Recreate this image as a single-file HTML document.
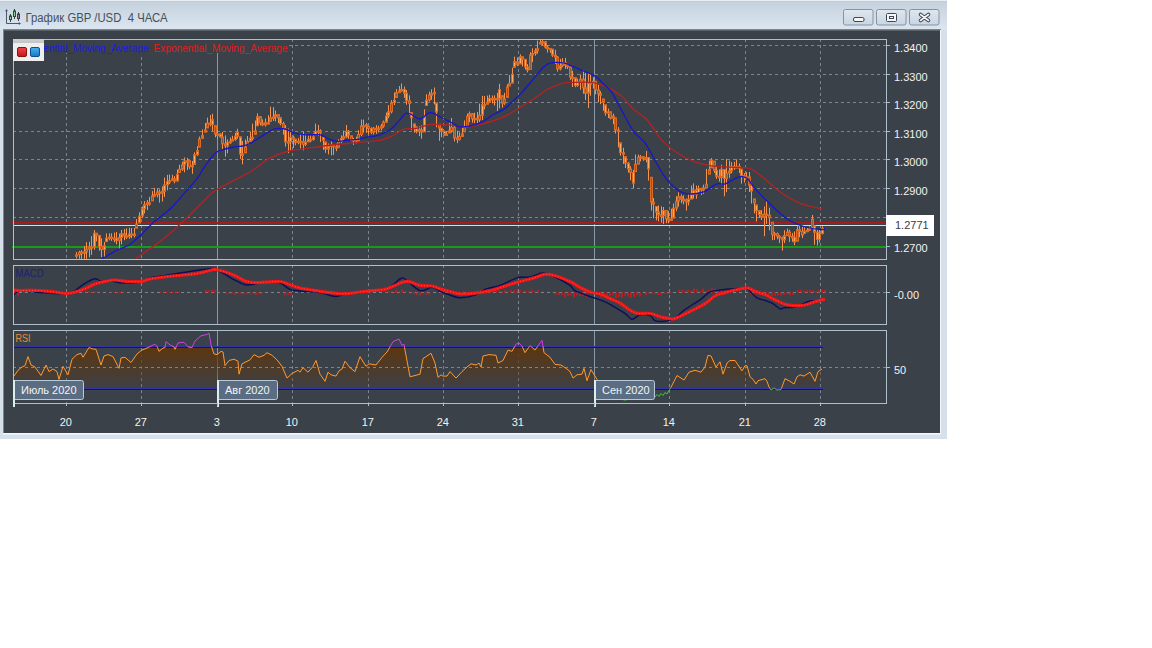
<!DOCTYPE html>
<html><head><meta charset="utf-8"><style>html,body{margin:0;padding:0;background:#fff;width:1152px;height:648px;overflow:hidden}svg{display:block}</style></head>
<body><svg width="1152" height="648" viewBox="0 0 1152 648">
<rect x="0" y="0" width="947" height="439" fill="#d6e0ea"/>
<defs>
<linearGradient id="tb" x1="0" y1="0" x2="0" y2="1"><stop offset="0" stop-color="#c3d0dc"/><stop offset="1" stop-color="#dce6f0"/></linearGradient>
<linearGradient id="btn" x1="0" y1="0" x2="0" y2="1"><stop offset="0" stop-color="#dfe7ef"/><stop offset="1" stop-color="#c9d5e1"/></linearGradient>
<linearGradient id="rsifill" gradientUnits="userSpaceOnUse" x1="0" y1="347" x2="0" y2="392"><stop offset="0" stop-color="#5c3610" stop-opacity="1"/><stop offset="1" stop-color="#5c3610" stop-opacity="0"/></linearGradient>
<linearGradient id="legtop" x1="0" y1="0" x2="0" y2="1"><stop offset="0" stop-color="#cfcfcf"/><stop offset="1" stop-color="#c4c4c4"/></linearGradient>
<linearGradient id="sqr" x1="0" y1="0" x2="0" y2="1"><stop offset="0" stop-color="#f04848"/><stop offset="1" stop-color="#c01818"/></linearGradient>
<linearGradient id="sqb" x1="0" y1="0" x2="0" y2="1"><stop offset="0" stop-color="#48b0f0"/><stop offset="1" stop-color="#1878c0"/></linearGradient>
<clipPath id="cmain"><rect x="14" y="40" width="872" height="219"/></clipPath>
<clipPath id="cmacd"><rect x="14" y="266" width="872" height="58"/></clipPath>
<clipPath id="crsi"><rect x="14" y="331" width="872" height="72"/></clipPath>
<clipPath id="crsimid"><rect x="14" y="347" width="872" height="56"/></clipPath>
<clipPath id="crsitop"><rect x="14" y="331" width="872" height="16.5"/></clipPath>
<clipPath id="crsibot"><rect x="14" y="388.5" width="872" height="15"/></clipPath>
<clipPath id="crsiorange"><rect x="14" y="346.5" width="872" height="42"/></clipPath>
</defs>
<rect x="0" y="0" width="947" height="30" fill="url(#tb)"/>
<rect x="0" y="0" width="947" height="1" fill="#e8eef4"/>
<rect x="0" y="1" width="947" height="1" fill="#c2cbd4"/>
<g fill="none" stroke="#4a5a6c" stroke-width="1"><path d="M6.5,10 V23.5 H20"/></g>
<path d="M5,11.2 L6.5,9 L8,11.2 Z M18.8,22 L21,23.5 L18.8,25 Z" fill="#4a5a6c"/>
<g stroke="#34404c" stroke-width="1"><line x1="10.5" y1="14" x2="10.5" y2="22"/><line x1="14.5" y1="9" x2="14.5" y2="19"/><line x1="18.5" y1="12" x2="18.5" y2="21"/></g>
<rect x="9.5" y="16" width="2" height="3.5" fill="#9ccf9c" stroke="#2f4a36"/>
<rect x="13.5" y="11" width="2" height="5.5" fill="#8fcc8f" stroke="#2f4a36"/>
<rect x="17.5" y="14" width="2" height="4.5" fill="#a07c88" stroke="#453440"/>
<text x="25.5" y="21.7" font-family="Liberation Sans" font-size="12.3" fill="#45505e" textLength="142" lengthAdjust="spacingAndGlyphs" xml:space="preserve">График GBP /USD  4 ЧАСА</text>
<rect x="843.5" y="9.5" width="29.5" height="15.5" rx="2" fill="url(#btn)" stroke="#8494a6"/>
<rect x="876.5" y="9.5" width="29.5" height="15.5" rx="2" fill="url(#btn)" stroke="#8494a6"/>
<rect x="909.5" y="9.5" width="29.5" height="15.5" rx="2" fill="url(#btn)" stroke="#8494a6"/>
<rect x="853.5" y="17.5" width="10.5" height="4" rx="1.5" fill="#f4f6f8" stroke="#3c4654"/>
<rect x="886.5" y="13.5" width="10" height="8" rx="1" fill="#f4f6f8" stroke="#3c4654"/><rect x="889.5" y="16.5" width="4" height="2" fill="none" stroke="#3c4654"/>
<path d="M920.5,14.5 L928.5,20.5 M928.5,14.5 L920.5,20.5" stroke="#3c4654" stroke-width="3.6" stroke-linecap="round"/><path d="M920.5,14.5 L928.5,20.5 M928.5,14.5 L920.5,20.5" stroke="#f4f6f8" stroke-width="1.6" stroke-linecap="round"/>
<rect x="3" y="29" width="938" height="405" fill="#7c848c"/>
<rect x="4" y="30" width="936" height="403" fill="#3b4149"/>
<rect x="940" y="30" width="1" height="404" fill="#f4f7fa"/>
<rect x="3" y="433" width="938" height="1.5" fill="#f4f7fa"/>
<rect x="4" y="30" width="936" height="1" fill="#5a6068"/>
<line x1="13" y1="45.5" x2="886" y2="45.5" stroke="#7a858f" stroke-width="1" stroke-dasharray="3,3"/>
<line x1="13" y1="74.5" x2="886" y2="74.5" stroke="#7a858f" stroke-width="1" stroke-dasharray="3,3"/>
<line x1="13" y1="102.5" x2="886" y2="102.5" stroke="#7a858f" stroke-width="1" stroke-dasharray="3,3"/>
<line x1="13" y1="131.5" x2="886" y2="131.5" stroke="#7a858f" stroke-width="1" stroke-dasharray="3,3"/>
<line x1="13" y1="159.5" x2="886" y2="159.5" stroke="#7a858f" stroke-width="1" stroke-dasharray="3,3"/>
<line x1="13" y1="188.5" x2="886" y2="188.5" stroke="#7a858f" stroke-width="1" stroke-dasharray="3,3"/>
<line x1="13" y1="217.5" x2="886" y2="217.5" stroke="#7a858f" stroke-width="1" stroke-dasharray="3,3"/>
<line x1="13" y1="246.5" x2="886" y2="246.5" stroke="#7a858f" stroke-width="1" stroke-dasharray="3,3"/>
<line x1="66.5" y1="39" x2="66.5" y2="259" stroke="#7a858f" stroke-width="1" stroke-dasharray="3,3"/>
<line x1="66.5" y1="265" x2="66.5" y2="324" stroke="#7a858f" stroke-width="1" stroke-dasharray="3,3"/>
<line x1="66.5" y1="330" x2="66.5" y2="403" stroke="#7a858f" stroke-width="1" stroke-dasharray="3,3"/>
<line x1="141.5" y1="39" x2="141.5" y2="259" stroke="#7a858f" stroke-width="1" stroke-dasharray="3,3"/>
<line x1="141.5" y1="265" x2="141.5" y2="324" stroke="#7a858f" stroke-width="1" stroke-dasharray="3,3"/>
<line x1="141.5" y1="330" x2="141.5" y2="403" stroke="#7a858f" stroke-width="1" stroke-dasharray="3,3"/>
<line x1="292.5" y1="39" x2="292.5" y2="259" stroke="#7a858f" stroke-width="1" stroke-dasharray="3,3"/>
<line x1="292.5" y1="265" x2="292.5" y2="324" stroke="#7a858f" stroke-width="1" stroke-dasharray="3,3"/>
<line x1="292.5" y1="330" x2="292.5" y2="403" stroke="#7a858f" stroke-width="1" stroke-dasharray="3,3"/>
<line x1="368.5" y1="39" x2="368.5" y2="259" stroke="#7a858f" stroke-width="1" stroke-dasharray="3,3"/>
<line x1="368.5" y1="265" x2="368.5" y2="324" stroke="#7a858f" stroke-width="1" stroke-dasharray="3,3"/>
<line x1="368.5" y1="330" x2="368.5" y2="403" stroke="#7a858f" stroke-width="1" stroke-dasharray="3,3"/>
<line x1="443.5" y1="39" x2="443.5" y2="259" stroke="#7a858f" stroke-width="1" stroke-dasharray="3,3"/>
<line x1="443.5" y1="265" x2="443.5" y2="324" stroke="#7a858f" stroke-width="1" stroke-dasharray="3,3"/>
<line x1="443.5" y1="330" x2="443.5" y2="403" stroke="#7a858f" stroke-width="1" stroke-dasharray="3,3"/>
<line x1="518.5" y1="39" x2="518.5" y2="259" stroke="#7a858f" stroke-width="1" stroke-dasharray="3,3"/>
<line x1="518.5" y1="265" x2="518.5" y2="324" stroke="#7a858f" stroke-width="1" stroke-dasharray="3,3"/>
<line x1="518.5" y1="330" x2="518.5" y2="403" stroke="#7a858f" stroke-width="1" stroke-dasharray="3,3"/>
<line x1="669.5" y1="39" x2="669.5" y2="259" stroke="#7a858f" stroke-width="1" stroke-dasharray="3,3"/>
<line x1="669.5" y1="265" x2="669.5" y2="324" stroke="#7a858f" stroke-width="1" stroke-dasharray="3,3"/>
<line x1="669.5" y1="330" x2="669.5" y2="403" stroke="#7a858f" stroke-width="1" stroke-dasharray="3,3"/>
<line x1="745.5" y1="39" x2="745.5" y2="259" stroke="#7a858f" stroke-width="1" stroke-dasharray="3,3"/>
<line x1="745.5" y1="265" x2="745.5" y2="324" stroke="#7a858f" stroke-width="1" stroke-dasharray="3,3"/>
<line x1="745.5" y1="330" x2="745.5" y2="403" stroke="#7a858f" stroke-width="1" stroke-dasharray="3,3"/>
<line x1="820.5" y1="39" x2="820.5" y2="259" stroke="#7a858f" stroke-width="1" stroke-dasharray="3,3"/>
<line x1="820.5" y1="265" x2="820.5" y2="324" stroke="#7a858f" stroke-width="1" stroke-dasharray="3,3"/>
<line x1="820.5" y1="330" x2="820.5" y2="403" stroke="#7a858f" stroke-width="1" stroke-dasharray="3,3"/>
<line x1="217.5" y1="40" x2="217.5" y2="259" stroke="#8799a8" stroke-width="1"/>
<line x1="217.5" y1="266" x2="217.5" y2="324" stroke="#8799a8" stroke-width="1"/>
<line x1="217.5" y1="331" x2="217.5" y2="403" stroke="#8799a8" stroke-width="1"/>
<line x1="594.5" y1="40" x2="594.5" y2="259" stroke="#8799a8" stroke-width="1"/>
<line x1="594.5" y1="266" x2="594.5" y2="324" stroke="#8799a8" stroke-width="1"/>
<line x1="594.5" y1="331" x2="594.5" y2="403" stroke="#8799a8" stroke-width="1"/>
<line x1="13" y1="292.5" x2="886" y2="292.5" stroke="#7a858f" stroke-width="1" stroke-dasharray="3,3"/>
<line x1="13" y1="367.5" x2="886" y2="367.5" stroke="#7a858f" stroke-width="1" stroke-dasharray="3,3"/>
<rect x="12" y="222" width="874" height="2" fill="#a51c1c"/>
<rect x="14" y="225" width="872" height="1" fill="#dcdcdc"/>
<rect x="12" y="246" width="874" height="2" fill="#1a9a1a"/>
<g clip-path="url(#cmain)">
<path d="M76.5,252.1V258.5M79.5,250.8V258.7M81.5,250.2V259.0M84.5,246.0V258.9M86.5,242.2V258.8M89.5,241.8V257.3M91.5,236.1V254.8M94.5,230.1V249.7M96.5,233.0V241.4M99.5,235.1V250.8M101.5,238.3V257.1M104.5,242.0V257.7M106.5,233.4V241.6M109.5,233.3V240.3M111.5,233.3V240.9M114.5,232.6V242.2M116.5,232.0V244.3M119.5,233.5V249.3M121.5,230.0V244.3M124.5,229.0V240.2M126.5,228.3V239.1M129.5,227.7V238.8M131.5,228.0V238.2M134.5,228.0V237.3M136.5,219.1V228.1M139.5,212.3V223.0M142.5,206.6V218.1M144.5,201.1V213.4M147.5,200.1V210.1M149.5,196.9V205.7M152.5,191.1V200.9M154.5,187.9V196.9M157.5,188.5V197.4M159.5,189.5V202.6M162.5,186.4V201.5M164.5,177.6V197.1M167.5,174.9V190.3M169.5,174.5V184.0M172.5,174.8V180.8M174.5,176.1V183.3M177.5,169.6V181.1M179.5,164.8V172.5M182.5,161.8V170.9M184.5,157.5V172.3M187.5,157.9V170.0M189.5,160.6V168.9M192.5,161.0V173.8M194.5,152.3V164.3M197.5,146.2V155.8M199.5,136.5V147.1M202.5,129.5V138.4M205.5,123.0V132.1M207.5,117.6V128.0M210.5,115.0V126.5M212.5,113.8V131.0M215.5,125.7V137.3M217.5,130.3V139.1M220.5,133.2V137.7M222.5,132.0V149.2M225.5,135.4V156.7M227.5,139.4V153.3M230.5,137.5V143.8M232.5,135.8V141.0M235.5,132.9V140.8M237.5,128.8V138.6M240.5,136.8V159.0M242.5,141.0V164.4M245.5,139.4V152.9M247.5,136.0V144.4M250.5,131.5V141.4M252.5,123.7V140.4M255.5,120.5V134.3M257.5,113.4V125.7M260.5,116.3V125.3M262.5,119.4V126.2M265.5,118.4V126.5M268.5,115.1V124.4M270.5,106.7V121.4M273.5,107.1V121.0M275.5,110.5V121.4M278.5,114.7V123.0M280.5,117.5V125.3M283.5,121.8V134.6M285.5,125.1V146.5M288.5,128.5V153.1M290.5,130.5V151.0M293.5,135.6V148.0M295.5,138.9V145.3M298.5,138.1V144.3M300.5,133.7V148.6M303.5,131.7V150.4M305.5,134.3V146.0M308.5,135.4V142.2M310.5,135.3V142.2M313.5,133.5V140.5M315.5,123.7V134.8M318.5,124.9V136.1M320.5,129.3V142.1M323.5,137.3V149.7M325.5,141.9V152.8M328.5,143.5V154.4M331.5,141.6V155.4M333.5,143.9V154.9M336.5,143.8V151.2M338.5,139.3V147.4M341.5,135.3V143.3M343.5,130.6V139.9M346.5,125.0V138.1M348.5,130.0V138.8M351.5,135.8V141.2M353.5,137.8V144.9M356.5,136.7V143.4M358.5,130.2V140.9M361.5,119.5V136.2M363.5,119.6V132.6M366.5,123.0V132.8M368.5,126.3V134.7M371.5,127.4V134.1M373.5,126.9V134.5M376.5,125.1V133.9M378.5,125.7V132.4M381.5,124.0V130.4M383.5,120.5V127.7M386.5,112.5V122.9M388.5,105.2V118.1M391.5,100.1V113.4M394.5,92.4V105.0M396.5,89.1V97.4M399.5,86.0V92.9M401.5,83.5V91.7M404.5,86.6V97.9M406.5,90.0V104.8M409.5,95.3V114.9M411.5,112.6V130.1M414.5,123.9V132.7M416.5,126.4V133.4M419.5,126.2V136.1M421.5,125.4V138.8M424.5,109.3V132.0M426.5,94.1V105.5M429.5,91.7V101.5M431.5,89.3V99.8M434.5,87.5V104.4M436.5,102.9V127.3M439.5,124.3V140.9M441.5,128.2V137.2M444.5,130.6V135.6M446.5,131.4V135.4M449.5,122.5V133.0M451.5,118.0V132.7M454.5,125.4V141.5M457.5,130.7V143.1M459.5,132.3V140.5M462.5,128.0V136.4M464.5,120.4V131.8M467.5,113.7V126.8M469.5,111.5V122.2M472.5,113.2V122.7M474.5,112.7V123.1M477.5,111.9V123.7M479.5,103.5V122.2M482.5,95.9V120.3M484.5,96.0V109.3M487.5,95.6V104.2M489.5,94.8V102.3M492.5,95.5V103.3M494.5,95.4V105.5M497.5,92.8V111.0M499.5,83.8V108.3M502.5,95.7V107.5M504.5,92.8V104.8M507.5,84.2V97.3M509.5,75.0V86.0M512.5,67.7V83.1M514.5,56.7V67.4M517.5,57.4V66.1M520.5,54.4V64.0M522.5,56.7V66.4M525.5,59.3V69.5M527.5,64.2V72.4M530.5,52.3V69.5M532.5,48.3V62.1M535.5,48.3V55.7M537.5,40.6V53.6M540.5,39.7V43.7M542.5,39.6V45.3M545.5,41.0V48.5M547.5,45.1V52.6M550.5,48.0V52.8M552.5,49.0V56.9M555.5,49.8V64.0M557.5,56.0V71.6M560.5,58.9V70.4M562.5,58.1V67.2M565.5,57.9V68.9M567.5,63.8V69.1M570.5,66.1V79.9M572.5,70.8V87.0M575.5,77.7V87.1M577.5,78.7V86.8M580.5,74.6V89.8M583.5,70.1V93.7M585.5,72.8V99.9M588.5,73.3V107.9M590.5,74.3V95.8M593.5,77.3V88.6M595.5,81.2V94.3M598.5,84.7V102.2M600.5,91.2V104.1M603.5,99.0V110.7M605.5,104.8V115.7M608.5,108.6V118.0M610.5,111.8V119.4M613.5,113.7V124.2M615.5,117.9V133.5M618.5,127.2V147.3M620.5,142.8V155.7M623.5,147.8V163.9M625.5,156.7V168.0M628.5,162.1V172.6M630.5,166.2V180.4M633.5,169.9V188.1M635.5,154.5V171.6M638.5,154.6V164.1M640.5,155.0V161.4M643.5,156.5V160.9M646.5,151.0V162.2M648.5,157.5V180.6M651.5,177.3V210.6M653.5,198.0V218.3M656.5,206.5V220.4M658.5,205.5V221.3M661.5,206.4V222.6M663.5,207.0V224.1M666.5,210.3V223.1M668.5,211.1V223.2M671.5,208.7V220.7M673.5,203.5V218.1M676.5,196.2V211.2M678.5,192.3V206.6M681.5,194.5V203.2M683.5,195.5V204.3M686.5,198.5V210.6M688.5,194.3V205.5M691.5,185.5V199.1M693.5,183.4V198.6M696.5,185.6V198.7M698.5,185.5V192.7M701.5,187.8V195.1M703.5,184.7V193.9M706.5,168.9V187.9M709.5,160.6V174.1M711.5,158.1V167.9M714.5,161.1V173.0M716.5,167.2V179.0M719.5,169.4V181.5M721.5,164.7V184.6M724.5,169.4V196.3M726.5,159.1V192.2M729.5,160.6V177.8M731.5,162.1V173.4M734.5,161.8V169.9M736.5,159.3V168.3M739.5,163.5V173.0M741.5,169.1V183.6M744.5,173.2V182.5M746.5,172.2V178.8M749.5,172.0V192.0M751.5,182.6V203.5M754.5,198.9V213.4M756.5,204.9V221.5M759.5,210.4V217.5M761.5,210.2V220.0M764.5,206.5V236.2M766.5,200.9V223.9M769.5,207.7V230.3M772.5,222.2V240.2M774.5,231.8V239.9M777.5,232.5V239.3M779.5,235.1V243.1M782.5,236.6V250.6M784.5,230.2V243.1M787.5,228.6V235.6M789.5,229.7V241.9M792.5,233.1V241.7M794.5,231.4V245.2M797.5,225.6V241.2M799.5,225.2V237.2M802.5,227.0V238.1M804.5,226.7V233.6M807.5,227.8V232.2M809.5,226.5V230.8M812.5,214.9V228.3M814.5,225.9V244.8M817.5,229.5V245.6M819.5,229.9V242.5M822.5,226.3V234.4" stroke="#f59450" stroke-width="1" fill="none"/>
<rect x="75.5" y="254.8" width="2" height="1.5" fill="#8a5a3a" stroke="#dc6a22" stroke-width="1"/>
<rect x="78.5" y="252.4" width="2" height="2.3" fill="#8a5a3a" stroke="#dc6a22" stroke-width="1"/>
<rect x="80.5" y="251.9" width="2" height="1.5" fill="#ffab62" stroke="#dc6a22" stroke-width="1"/>
<rect x="83.5" y="251.9" width="2" height="1.5" fill="#ffab62" stroke="#dc6a22" stroke-width="1"/>
<rect x="85.5" y="249.0" width="2" height="2.9" fill="#8a5a3a" stroke="#dc6a22" stroke-width="1"/>
<rect x="88.5" y="246.8" width="2" height="2.3" fill="#ffab62" stroke="#dc6a22" stroke-width="1"/>
<rect x="90.5" y="246.8" width="2" height="1.5" fill="#ffab62" stroke="#dc6a22" stroke-width="1"/>
<rect x="93.5" y="233.2" width="2" height="13.8" fill="#ffab62" stroke="#dc6a22" stroke-width="1"/>
<rect x="95.5" y="233.2" width="2" height="2.2" fill="#8a5a3a" stroke="#dc6a22" stroke-width="1"/>
<rect x="98.5" y="235.4" width="2" height="11.1" fill="#ffab62" stroke="#dc6a22" stroke-width="1"/>
<rect x="100.5" y="246.5" width="2" height="3.1" fill="#8a5a3a" stroke="#dc6a22" stroke-width="1"/>
<rect x="103.5" y="245.8" width="2" height="3.9" fill="#ffab62" stroke="#dc6a22" stroke-width="1"/>
<rect x="105.5" y="238.2" width="2" height="3.4" fill="#ffab62" stroke="#dc6a22" stroke-width="1"/>
<rect x="108.5" y="237.1" width="2" height="1.5" fill="#8a5a3a" stroke="#dc6a22" stroke-width="1"/>
<rect x="110.5" y="237.1" width="2" height="1.5" fill="#8a5a3a" stroke="#dc6a22" stroke-width="1"/>
<rect x="113.5" y="238.1" width="2" height="1.5" fill="#ffab62" stroke="#dc6a22" stroke-width="1"/>
<rect x="115.5" y="238.1" width="2" height="2.5" fill="#ffab62" stroke="#dc6a22" stroke-width="1"/>
<rect x="118.5" y="237.6" width="2" height="3.0" fill="#8a5a3a" stroke="#dc6a22" stroke-width="1"/>
<rect x="120.5" y="233.7" width="2" height="3.9" fill="#ffab62" stroke="#dc6a22" stroke-width="1"/>
<rect x="123.5" y="233.7" width="2" height="2.1" fill="#ffab62" stroke="#dc6a22" stroke-width="1"/>
<rect x="125.5" y="235.8" width="2" height="1.5" fill="#8a5a3a" stroke="#dc6a22" stroke-width="1"/>
<rect x="128.5" y="233.9" width="2" height="2.8" fill="#ffab62" stroke="#dc6a22" stroke-width="1"/>
<rect x="130.5" y="233.9" width="2" height="1.5" fill="#8a5a3a" stroke="#dc6a22" stroke-width="1"/>
<rect x="133.5" y="234.0" width="2" height="1.5" fill="#ffab62" stroke="#dc6a22" stroke-width="1"/>
<rect x="135.5" y="224.0" width="2" height="4.1" fill="#8a5a3a" stroke="#dc6a22" stroke-width="1"/>
<rect x="138.5" y="216.0" width="2" height="7.0" fill="#ffab62" stroke="#dc6a22" stroke-width="1"/>
<rect x="141.5" y="208.7" width="2" height="7.3" fill="#ffab62" stroke="#dc6a22" stroke-width="1"/>
<rect x="143.5" y="204.6" width="2" height="4.0" fill="#ffab62" stroke="#dc6a22" stroke-width="1"/>
<rect x="146.5" y="202.8" width="2" height="1.8" fill="#8a5a3a" stroke="#dc6a22" stroke-width="1"/>
<rect x="148.5" y="202.8" width="2" height="1.5" fill="#8a5a3a" stroke="#dc6a22" stroke-width="1"/>
<rect x="151.5" y="195.8" width="2" height="5.1" fill="#8a5a3a" stroke="#dc6a22" stroke-width="1"/>
<rect x="153.5" y="194.6" width="2" height="1.5" fill="#ffab62" stroke="#dc6a22" stroke-width="1"/>
<rect x="156.5" y="192.0" width="2" height="2.6" fill="#8a5a3a" stroke="#dc6a22" stroke-width="1"/>
<rect x="158.5" y="192.0" width="2" height="1.5" fill="#ffab62" stroke="#dc6a22" stroke-width="1"/>
<rect x="161.5" y="191.4" width="2" height="1.8" fill="#ffab62" stroke="#dc6a22" stroke-width="1"/>
<rect x="163.5" y="184.9" width="2" height="6.5" fill="#ffab62" stroke="#dc6a22" stroke-width="1"/>
<rect x="166.5" y="181.5" width="2" height="3.4" fill="#ffab62" stroke="#dc6a22" stroke-width="1"/>
<rect x="168.5" y="180.6" width="2" height="1.5" fill="#ffab62" stroke="#dc6a22" stroke-width="1"/>
<rect x="171.5" y="178.8" width="2" height="1.8" fill="#8a5a3a" stroke="#dc6a22" stroke-width="1"/>
<rect x="173.5" y="178.8" width="2" height="2.3" fill="#ffab62" stroke="#dc6a22" stroke-width="1"/>
<rect x="176.5" y="174.4" width="2" height="6.7" fill="#ffab62" stroke="#dc6a22" stroke-width="1"/>
<rect x="178.5" y="169.3" width="2" height="3.2" fill="#8a5a3a" stroke="#dc6a22" stroke-width="1"/>
<rect x="181.5" y="164.8" width="2" height="4.5" fill="#8a5a3a" stroke="#dc6a22" stroke-width="1"/>
<rect x="183.5" y="161.0" width="2" height="3.9" fill="#ffab62" stroke="#dc6a22" stroke-width="1"/>
<rect x="186.5" y="160.7" width="2" height="1.5" fill="#ffab62" stroke="#dc6a22" stroke-width="1"/>
<rect x="188.5" y="160.7" width="2" height="5.9" fill="#8a5a3a" stroke="#dc6a22" stroke-width="1"/>
<rect x="191.5" y="165.4" width="2" height="1.5" fill="#8a5a3a" stroke="#dc6a22" stroke-width="1"/>
<rect x="193.5" y="154.8" width="2" height="9.6" fill="#ffab62" stroke="#dc6a22" stroke-width="1"/>
<rect x="196.5" y="150.6" width="2" height="4.2" fill="#ffab62" stroke="#dc6a22" stroke-width="1"/>
<rect x="198.5" y="139.0" width="2" height="8.1" fill="#8a5a3a" stroke="#dc6a22" stroke-width="1"/>
<rect x="201.5" y="135.6" width="2" height="2.7" fill="#ffab62" stroke="#dc6a22" stroke-width="1"/>
<rect x="204.5" y="129.9" width="2" height="2.2" fill="#8a5a3a" stroke="#dc6a22" stroke-width="1"/>
<rect x="206.5" y="123.0" width="2" height="4.9" fill="#8a5a3a" stroke="#dc6a22" stroke-width="1"/>
<rect x="209.5" y="123.0" width="2" height="1.5" fill="#8a5a3a" stroke="#dc6a22" stroke-width="1"/>
<rect x="211.5" y="119.7" width="2" height="4.9" fill="#ffab62" stroke="#dc6a22" stroke-width="1"/>
<rect x="214.5" y="125.7" width="2" height="8.4" fill="#8a5a3a" stroke="#dc6a22" stroke-width="1"/>
<rect x="216.5" y="134.0" width="2" height="1.5" fill="#ffab62" stroke="#dc6a22" stroke-width="1"/>
<rect x="219.5" y="134.0" width="2" height="3.0" fill="#ffab62" stroke="#dc6a22" stroke-width="1"/>
<rect x="221.5" y="137.0" width="2" height="6.8" fill="#8a5a3a" stroke="#dc6a22" stroke-width="1"/>
<rect x="224.5" y="143.8" width="2" height="2.1" fill="#8a5a3a" stroke="#dc6a22" stroke-width="1"/>
<rect x="226.5" y="142.2" width="2" height="3.7" fill="#ffab62" stroke="#dc6a22" stroke-width="1"/>
<rect x="229.5" y="141.3" width="2" height="1.5" fill="#ffab62" stroke="#dc6a22" stroke-width="1"/>
<rect x="231.5" y="139.6" width="2" height="1.5" fill="#ffab62" stroke="#dc6a22" stroke-width="1"/>
<rect x="234.5" y="136.2" width="2" height="3.4" fill="#ffab62" stroke="#dc6a22" stroke-width="1"/>
<rect x="236.5" y="132.0" width="2" height="4.2" fill="#ffab62" stroke="#dc6a22" stroke-width="1"/>
<rect x="239.5" y="136.8" width="2" height="17.2" fill="#ffab62" stroke="#dc6a22" stroke-width="1"/>
<rect x="241.5" y="154.0" width="2" height="1.5" fill="#ffab62" stroke="#dc6a22" stroke-width="1"/>
<rect x="244.5" y="146.9" width="2" height="6.0" fill="#8a5a3a" stroke="#dc6a22" stroke-width="1"/>
<rect x="246.5" y="141.4" width="2" height="3.1" fill="#8a5a3a" stroke="#dc6a22" stroke-width="1"/>
<rect x="249.5" y="138.3" width="2" height="3.1" fill="#ffab62" stroke="#dc6a22" stroke-width="1"/>
<rect x="251.5" y="137.2" width="2" height="1.5" fill="#8a5a3a" stroke="#dc6a22" stroke-width="1"/>
<rect x="254.5" y="130.9" width="2" height="3.4" fill="#8a5a3a" stroke="#dc6a22" stroke-width="1"/>
<rect x="256.5" y="116.7" width="2" height="9.1" fill="#ffab62" stroke="#dc6a22" stroke-width="1"/>
<rect x="259.5" y="116.7" width="2" height="6.3" fill="#8a5a3a" stroke="#dc6a22" stroke-width="1"/>
<rect x="261.5" y="123.0" width="2" height="1.9" fill="#ffab62" stroke="#dc6a22" stroke-width="1"/>
<rect x="264.5" y="122.6" width="2" height="2.2" fill="#8a5a3a" stroke="#dc6a22" stroke-width="1"/>
<rect x="267.5" y="122.6" width="2" height="1.5" fill="#8a5a3a" stroke="#dc6a22" stroke-width="1"/>
<rect x="269.5" y="117.7" width="2" height="3.7" fill="#8a5a3a" stroke="#dc6a22" stroke-width="1"/>
<rect x="272.5" y="117.0" width="2" height="1.5" fill="#ffab62" stroke="#dc6a22" stroke-width="1"/>
<rect x="274.5" y="114.7" width="2" height="2.3" fill="#ffab62" stroke="#dc6a22" stroke-width="1"/>
<rect x="277.5" y="114.7" width="2" height="3.0" fill="#8a5a3a" stroke="#dc6a22" stroke-width="1"/>
<rect x="279.5" y="117.7" width="2" height="5.9" fill="#ffab62" stroke="#dc6a22" stroke-width="1"/>
<rect x="282.5" y="123.5" width="2" height="5.0" fill="#8a5a3a" stroke="#dc6a22" stroke-width="1"/>
<rect x="284.5" y="128.6" width="2" height="13.3" fill="#ffab62" stroke="#dc6a22" stroke-width="1"/>
<rect x="287.5" y="141.7" width="2" height="1.5" fill="#ffab62" stroke="#dc6a22" stroke-width="1"/>
<rect x="289.5" y="137.4" width="2" height="4.3" fill="#ffab62" stroke="#dc6a22" stroke-width="1"/>
<rect x="292.5" y="137.4" width="2" height="1.8" fill="#8a5a3a" stroke="#dc6a22" stroke-width="1"/>
<rect x="294.5" y="139.2" width="2" height="3.2" fill="#ffab62" stroke="#dc6a22" stroke-width="1"/>
<rect x="297.5" y="141.2" width="2" height="1.5" fill="#ffab62" stroke="#dc6a22" stroke-width="1"/>
<rect x="299.5" y="141.2" width="2" height="1.5" fill="#8a5a3a" stroke="#dc6a22" stroke-width="1"/>
<rect x="302.5" y="141.7" width="2" height="2.8" fill="#8a5a3a" stroke="#dc6a22" stroke-width="1"/>
<rect x="304.5" y="141.9" width="2" height="2.6" fill="#ffab62" stroke="#dc6a22" stroke-width="1"/>
<rect x="307.5" y="139.3" width="2" height="2.6" fill="#ffab62" stroke="#dc6a22" stroke-width="1"/>
<rect x="309.5" y="139.3" width="2" height="1.5" fill="#ffab62" stroke="#dc6a22" stroke-width="1"/>
<rect x="312.5" y="136.8" width="2" height="2.9" fill="#ffab62" stroke="#dc6a22" stroke-width="1"/>
<rect x="314.5" y="131.4" width="2" height="3.3" fill="#ffab62" stroke="#dc6a22" stroke-width="1"/>
<rect x="317.5" y="130.9" width="2" height="1.5" fill="#ffab62" stroke="#dc6a22" stroke-width="1"/>
<rect x="319.5" y="130.9" width="2" height="2.0" fill="#ffab62" stroke="#dc6a22" stroke-width="1"/>
<rect x="322.5" y="137.3" width="2" height="3.0" fill="#ffab62" stroke="#dc6a22" stroke-width="1"/>
<rect x="324.5" y="141.9" width="2" height="7.2" fill="#ffab62" stroke="#dc6a22" stroke-width="1"/>
<rect x="327.5" y="146.3" width="2" height="2.8" fill="#ffab62" stroke="#dc6a22" stroke-width="1"/>
<rect x="330.5" y="144.9" width="2" height="1.5" fill="#8a5a3a" stroke="#dc6a22" stroke-width="1"/>
<rect x="332.5" y="144.9" width="2" height="1.9" fill="#ffab62" stroke="#dc6a22" stroke-width="1"/>
<rect x="335.5" y="146.9" width="2" height="1.5" fill="#8a5a3a" stroke="#dc6a22" stroke-width="1"/>
<rect x="337.5" y="141.5" width="2" height="5.9" fill="#8a5a3a" stroke="#dc6a22" stroke-width="1"/>
<rect x="340.5" y="138.5" width="2" height="3.0" fill="#ffab62" stroke="#dc6a22" stroke-width="1"/>
<rect x="342.5" y="136.8" width="2" height="1.7" fill="#ffab62" stroke="#dc6a22" stroke-width="1"/>
<rect x="345.5" y="131.3" width="2" height="5.6" fill="#ffab62" stroke="#dc6a22" stroke-width="1"/>
<rect x="347.5" y="131.3" width="2" height="3.6" fill="#ffab62" stroke="#dc6a22" stroke-width="1"/>
<rect x="350.5" y="135.8" width="2" height="4.7" fill="#8a5a3a" stroke="#dc6a22" stroke-width="1"/>
<rect x="352.5" y="139.5" width="2" height="1.5" fill="#ffab62" stroke="#dc6a22" stroke-width="1"/>
<rect x="355.5" y="139.5" width="2" height="1.6" fill="#8a5a3a" stroke="#dc6a22" stroke-width="1"/>
<rect x="357.5" y="134.5" width="2" height="6.4" fill="#8a5a3a" stroke="#dc6a22" stroke-width="1"/>
<rect x="360.5" y="125.8" width="2" height="8.7" fill="#8a5a3a" stroke="#dc6a22" stroke-width="1"/>
<rect x="362.5" y="125.8" width="2" height="1.5" fill="#8a5a3a" stroke="#dc6a22" stroke-width="1"/>
<rect x="365.5" y="124.8" width="2" height="1.5" fill="#ffab62" stroke="#dc6a22" stroke-width="1"/>
<rect x="367.5" y="126.3" width="2" height="2.2" fill="#8a5a3a" stroke="#dc6a22" stroke-width="1"/>
<rect x="370.5" y="128.5" width="2" height="3.9" fill="#ffab62" stroke="#dc6a22" stroke-width="1"/>
<rect x="372.5" y="128.2" width="2" height="4.1" fill="#8a5a3a" stroke="#dc6a22" stroke-width="1"/>
<rect x="375.5" y="128.2" width="2" height="1.5" fill="#8a5a3a" stroke="#dc6a22" stroke-width="1"/>
<rect x="377.5" y="128.2" width="2" height="1.5" fill="#ffab62" stroke="#dc6a22" stroke-width="1"/>
<rect x="380.5" y="126.1" width="2" height="2.1" fill="#8a5a3a" stroke="#dc6a22" stroke-width="1"/>
<rect x="382.5" y="122.1" width="2" height="4.0" fill="#8a5a3a" stroke="#dc6a22" stroke-width="1"/>
<rect x="385.5" y="116.1" width="2" height="6.0" fill="#ffab62" stroke="#dc6a22" stroke-width="1"/>
<rect x="387.5" y="111.8" width="2" height="4.3" fill="#ffab62" stroke="#dc6a22" stroke-width="1"/>
<rect x="390.5" y="102.7" width="2" height="9.1" fill="#8a5a3a" stroke="#dc6a22" stroke-width="1"/>
<rect x="393.5" y="100.3" width="2" height="2.3" fill="#ffab62" stroke="#dc6a22" stroke-width="1"/>
<rect x="395.5" y="92.7" width="2" height="4.7" fill="#8a5a3a" stroke="#dc6a22" stroke-width="1"/>
<rect x="398.5" y="90.9" width="2" height="1.8" fill="#ffab62" stroke="#dc6a22" stroke-width="1"/>
<rect x="400.5" y="89.5" width="2" height="1.5" fill="#8a5a3a" stroke="#dc6a22" stroke-width="1"/>
<rect x="403.5" y="89.5" width="2" height="3.9" fill="#ffab62" stroke="#dc6a22" stroke-width="1"/>
<rect x="405.5" y="93.3" width="2" height="7.5" fill="#ffab62" stroke="#dc6a22" stroke-width="1"/>
<rect x="408.5" y="100.8" width="2" height="2.8" fill="#8a5a3a" stroke="#dc6a22" stroke-width="1"/>
<rect x="410.5" y="112.6" width="2" height="5.2" fill="#ffab62" stroke="#dc6a22" stroke-width="1"/>
<rect x="413.5" y="123.9" width="2" height="3.1" fill="#ffab62" stroke="#dc6a22" stroke-width="1"/>
<rect x="415.5" y="127.0" width="2" height="4.6" fill="#ffab62" stroke="#dc6a22" stroke-width="1"/>
<rect x="418.5" y="129.8" width="2" height="1.8" fill="#ffab62" stroke="#dc6a22" stroke-width="1"/>
<rect x="420.5" y="129.8" width="2" height="2.2" fill="#ffab62" stroke="#dc6a22" stroke-width="1"/>
<rect x="423.5" y="116.6" width="2" height="15.4" fill="#ffab62" stroke="#dc6a22" stroke-width="1"/>
<rect x="425.5" y="100.0" width="2" height="5.5" fill="#ffab62" stroke="#dc6a22" stroke-width="1"/>
<rect x="428.5" y="95.2" width="2" height="4.8" fill="#8a5a3a" stroke="#dc6a22" stroke-width="1"/>
<rect x="430.5" y="93.7" width="2" height="1.5" fill="#8a5a3a" stroke="#dc6a22" stroke-width="1"/>
<rect x="433.5" y="92.3" width="2" height="1.5" fill="#8a5a3a" stroke="#dc6a22" stroke-width="1"/>
<rect x="435.5" y="102.9" width="2" height="9.1" fill="#ffab62" stroke="#dc6a22" stroke-width="1"/>
<rect x="438.5" y="124.3" width="2" height="3.8" fill="#8a5a3a" stroke="#dc6a22" stroke-width="1"/>
<rect x="440.5" y="128.2" width="2" height="3.2" fill="#ffab62" stroke="#dc6a22" stroke-width="1"/>
<rect x="443.5" y="131.5" width="2" height="2.5" fill="#ffab62" stroke="#dc6a22" stroke-width="1"/>
<rect x="445.5" y="134.0" width="2" height="1.5" fill="#8a5a3a" stroke="#dc6a22" stroke-width="1"/>
<rect x="448.5" y="130.8" width="2" height="2.2" fill="#ffab62" stroke="#dc6a22" stroke-width="1"/>
<rect x="450.5" y="127.4" width="2" height="3.4" fill="#8a5a3a" stroke="#dc6a22" stroke-width="1"/>
<rect x="453.5" y="127.4" width="2" height="10.6" fill="#8a5a3a" stroke="#dc6a22" stroke-width="1"/>
<rect x="456.5" y="137.9" width="2" height="1.7" fill="#8a5a3a" stroke="#dc6a22" stroke-width="1"/>
<rect x="458.5" y="136.4" width="2" height="3.2" fill="#8a5a3a" stroke="#dc6a22" stroke-width="1"/>
<rect x="461.5" y="133.9" width="2" height="2.5" fill="#ffab62" stroke="#dc6a22" stroke-width="1"/>
<rect x="463.5" y="127.0" width="2" height="4.8" fill="#8a5a3a" stroke="#dc6a22" stroke-width="1"/>
<rect x="466.5" y="116.4" width="2" height="10.4" fill="#8a5a3a" stroke="#dc6a22" stroke-width="1"/>
<rect x="468.5" y="113.7" width="2" height="2.7" fill="#ffab62" stroke="#dc6a22" stroke-width="1"/>
<rect x="471.5" y="113.7" width="2" height="5.1" fill="#8a5a3a" stroke="#dc6a22" stroke-width="1"/>
<rect x="473.5" y="118.3" width="2" height="1.5" fill="#ffab62" stroke="#dc6a22" stroke-width="1"/>
<rect x="476.5" y="118.3" width="2" height="1.5" fill="#8a5a3a" stroke="#dc6a22" stroke-width="1"/>
<rect x="478.5" y="115.4" width="2" height="4.4" fill="#8a5a3a" stroke="#dc6a22" stroke-width="1"/>
<rect x="481.5" y="104.6" width="2" height="10.8" fill="#ffab62" stroke="#dc6a22" stroke-width="1"/>
<rect x="483.5" y="104.6" width="2" height="1.5" fill="#8a5a3a" stroke="#dc6a22" stroke-width="1"/>
<rect x="486.5" y="102.3" width="2" height="1.9" fill="#ffab62" stroke="#dc6a22" stroke-width="1"/>
<rect x="488.5" y="98.4" width="2" height="3.9" fill="#ffab62" stroke="#dc6a22" stroke-width="1"/>
<rect x="491.5" y="98.4" width="2" height="1.5" fill="#8a5a3a" stroke="#dc6a22" stroke-width="1"/>
<rect x="493.5" y="98.4" width="2" height="1.5" fill="#ffab62" stroke="#dc6a22" stroke-width="1"/>
<rect x="496.5" y="98.4" width="2" height="1.5" fill="#8a5a3a" stroke="#dc6a22" stroke-width="1"/>
<rect x="498.5" y="89.5" width="2" height="9.6" fill="#ffab62" stroke="#dc6a22" stroke-width="1"/>
<rect x="501.5" y="95.7" width="2" height="7.5" fill="#8a5a3a" stroke="#dc6a22" stroke-width="1"/>
<rect x="503.5" y="99.0" width="2" height="4.2" fill="#8a5a3a" stroke="#dc6a22" stroke-width="1"/>
<rect x="506.5" y="86.9" width="2" height="10.5" fill="#8a5a3a" stroke="#dc6a22" stroke-width="1"/>
<rect x="508.5" y="83.4" width="2" height="2.6" fill="#8a5a3a" stroke="#dc6a22" stroke-width="1"/>
<rect x="511.5" y="74.3" width="2" height="8.8" fill="#ffab62" stroke="#dc6a22" stroke-width="1"/>
<rect x="513.5" y="61.6" width="2" height="5.8" fill="#ffab62" stroke="#dc6a22" stroke-width="1"/>
<rect x="516.5" y="61.6" width="2" height="2.8" fill="#ffab62" stroke="#dc6a22" stroke-width="1"/>
<rect x="519.5" y="56.7" width="2" height="7.3" fill="#ffab62" stroke="#dc6a22" stroke-width="1"/>
<rect x="521.5" y="56.7" width="2" height="2.5" fill="#8a5a3a" stroke="#dc6a22" stroke-width="1"/>
<rect x="524.5" y="59.3" width="2" height="7.6" fill="#ffab62" stroke="#dc6a22" stroke-width="1"/>
<rect x="526.5" y="67.0" width="2" height="3.1" fill="#ffab62" stroke="#dc6a22" stroke-width="1"/>
<rect x="529.5" y="55.1" width="2" height="14.4" fill="#8a5a3a" stroke="#dc6a22" stroke-width="1"/>
<rect x="531.5" y="53.6" width="2" height="1.5" fill="#ffab62" stroke="#dc6a22" stroke-width="1"/>
<rect x="534.5" y="50.8" width="2" height="2.8" fill="#ffab62" stroke="#dc6a22" stroke-width="1"/>
<rect x="536.5" y="48.7" width="2" height="2.0" fill="#8a5a3a" stroke="#dc6a22" stroke-width="1"/>
<rect x="539.5" y="42.6" width="2" height="1.5" fill="#ffab62" stroke="#dc6a22" stroke-width="1"/>
<rect x="541.5" y="41.7" width="2" height="1.5" fill="#ffab62" stroke="#dc6a22" stroke-width="1"/>
<rect x="544.5" y="41.7" width="2" height="5.4" fill="#ffab62" stroke="#dc6a22" stroke-width="1"/>
<rect x="546.5" y="47.2" width="2" height="1.5" fill="#ffab62" stroke="#dc6a22" stroke-width="1"/>
<rect x="549.5" y="48.4" width="2" height="1.5" fill="#ffab62" stroke="#dc6a22" stroke-width="1"/>
<rect x="551.5" y="49.0" width="2" height="6.2" fill="#ffab62" stroke="#dc6a22" stroke-width="1"/>
<rect x="554.5" y="55.1" width="2" height="2.0" fill="#8a5a3a" stroke="#dc6a22" stroke-width="1"/>
<rect x="556.5" y="57.1" width="2" height="11.8" fill="#8a5a3a" stroke="#dc6a22" stroke-width="1"/>
<rect x="559.5" y="65.8" width="2" height="3.1" fill="#ffab62" stroke="#dc6a22" stroke-width="1"/>
<rect x="561.5" y="62.6" width="2" height="3.1" fill="#8a5a3a" stroke="#dc6a22" stroke-width="1"/>
<rect x="564.5" y="62.6" width="2" height="2.7" fill="#ffab62" stroke="#dc6a22" stroke-width="1"/>
<rect x="566.5" y="65.4" width="2" height="1.5" fill="#ffab62" stroke="#dc6a22" stroke-width="1"/>
<rect x="569.5" y="66.9" width="2" height="10.2" fill="#8a5a3a" stroke="#dc6a22" stroke-width="1"/>
<rect x="571.5" y="77.1" width="2" height="1.5" fill="#ffab62" stroke="#dc6a22" stroke-width="1"/>
<rect x="574.5" y="77.7" width="2" height="7.9" fill="#ffab62" stroke="#dc6a22" stroke-width="1"/>
<rect x="576.5" y="81.6" width="2" height="3.9" fill="#ffab62" stroke="#dc6a22" stroke-width="1"/>
<rect x="579.5" y="79.1" width="2" height="2.6" fill="#8a5a3a" stroke="#dc6a22" stroke-width="1"/>
<rect x="582.5" y="79.1" width="2" height="8.7" fill="#8a5a3a" stroke="#dc6a22" stroke-width="1"/>
<rect x="584.5" y="87.8" width="2" height="5.5" fill="#8a5a3a" stroke="#dc6a22" stroke-width="1"/>
<rect x="587.5" y="82.7" width="2" height="10.5" fill="#ffab62" stroke="#dc6a22" stroke-width="1"/>
<rect x="589.5" y="82.7" width="2" height="1.5" fill="#ffab62" stroke="#dc6a22" stroke-width="1"/>
<rect x="592.5" y="81.3" width="2" height="1.8" fill="#ffab62" stroke="#dc6a22" stroke-width="1"/>
<rect x="594.5" y="81.3" width="2" height="8.6" fill="#8a5a3a" stroke="#dc6a22" stroke-width="1"/>
<rect x="597.5" y="89.9" width="2" height="3.8" fill="#8a5a3a" stroke="#dc6a22" stroke-width="1"/>
<rect x="599.5" y="93.7" width="2" height="1.5" fill="#ffab62" stroke="#dc6a22" stroke-width="1"/>
<rect x="602.5" y="99.0" width="2" height="3.4" fill="#8a5a3a" stroke="#dc6a22" stroke-width="1"/>
<rect x="604.5" y="104.8" width="2" height="8.1" fill="#ffab62" stroke="#dc6a22" stroke-width="1"/>
<rect x="607.5" y="111.8" width="2" height="1.5" fill="#8a5a3a" stroke="#dc6a22" stroke-width="1"/>
<rect x="609.5" y="111.8" width="2" height="6.4" fill="#8a5a3a" stroke="#dc6a22" stroke-width="1"/>
<rect x="612.5" y="116.1" width="2" height="2.1" fill="#ffab62" stroke="#dc6a22" stroke-width="1"/>
<rect x="614.5" y="117.9" width="2" height="12.1" fill="#8a5a3a" stroke="#dc6a22" stroke-width="1"/>
<rect x="617.5" y="130.1" width="2" height="1.5" fill="#ffab62" stroke="#dc6a22" stroke-width="1"/>
<rect x="619.5" y="142.8" width="2" height="9.9" fill="#ffab62" stroke="#dc6a22" stroke-width="1"/>
<rect x="622.5" y="152.7" width="2" height="1.5" fill="#ffab62" stroke="#dc6a22" stroke-width="1"/>
<rect x="624.5" y="156.7" width="2" height="6.4" fill="#ffab62" stroke="#dc6a22" stroke-width="1"/>
<rect x="627.5" y="163.1" width="2" height="5.9" fill="#ffab62" stroke="#dc6a22" stroke-width="1"/>
<rect x="629.5" y="169.0" width="2" height="3.5" fill="#8a5a3a" stroke="#dc6a22" stroke-width="1"/>
<rect x="632.5" y="172.5" width="2" height="10.7" fill="#ffab62" stroke="#dc6a22" stroke-width="1"/>
<rect x="634.5" y="164.3" width="2" height="7.3" fill="#8a5a3a" stroke="#dc6a22" stroke-width="1"/>
<rect x="637.5" y="157.5" width="2" height="6.6" fill="#8a5a3a" stroke="#dc6a22" stroke-width="1"/>
<rect x="639.5" y="156.8" width="2" height="1.5" fill="#ffab62" stroke="#dc6a22" stroke-width="1"/>
<rect x="642.5" y="156.8" width="2" height="2.1" fill="#ffab62" stroke="#dc6a22" stroke-width="1"/>
<rect x="645.5" y="157.5" width="2" height="1.5" fill="#8a5a3a" stroke="#dc6a22" stroke-width="1"/>
<rect x="647.5" y="157.5" width="2" height="11.5" fill="#ffab62" stroke="#dc6a22" stroke-width="1"/>
<rect x="650.5" y="177.3" width="2" height="24.9" fill="#8a5a3a" stroke="#dc6a22" stroke-width="1"/>
<rect x="652.5" y="202.2" width="2" height="1.9" fill="#8a5a3a" stroke="#dc6a22" stroke-width="1"/>
<rect x="655.5" y="206.5" width="2" height="5.6" fill="#ffab62" stroke="#dc6a22" stroke-width="1"/>
<rect x="657.5" y="212.1" width="2" height="2.9" fill="#ffab62" stroke="#dc6a22" stroke-width="1"/>
<rect x="660.5" y="215.0" width="2" height="1.5" fill="#ffab62" stroke="#dc6a22" stroke-width="1"/>
<rect x="662.5" y="210.5" width="2" height="5.3" fill="#ffab62" stroke="#dc6a22" stroke-width="1"/>
<rect x="665.5" y="210.5" width="2" height="8.2" fill="#8a5a3a" stroke="#dc6a22" stroke-width="1"/>
<rect x="667.5" y="218.6" width="2" height="1.5" fill="#8a5a3a" stroke="#dc6a22" stroke-width="1"/>
<rect x="670.5" y="218.9" width="2" height="1.5" fill="#8a5a3a" stroke="#dc6a22" stroke-width="1"/>
<rect x="672.5" y="208.2" width="2" height="9.9" fill="#ffab62" stroke="#dc6a22" stroke-width="1"/>
<rect x="675.5" y="201.2" width="2" height="7.0" fill="#8a5a3a" stroke="#dc6a22" stroke-width="1"/>
<rect x="677.5" y="196.7" width="2" height="4.4" fill="#8a5a3a" stroke="#dc6a22" stroke-width="1"/>
<rect x="680.5" y="196.7" width="2" height="2.7" fill="#ffab62" stroke="#dc6a22" stroke-width="1"/>
<rect x="682.5" y="199.4" width="2" height="1.5" fill="#8a5a3a" stroke="#dc6a22" stroke-width="1"/>
<rect x="685.5" y="199.7" width="2" height="2.2" fill="#ffab62" stroke="#dc6a22" stroke-width="1"/>
<rect x="687.5" y="199.1" width="2" height="2.9" fill="#ffab62" stroke="#dc6a22" stroke-width="1"/>
<rect x="690.5" y="193.7" width="2" height="5.4" fill="#ffab62" stroke="#dc6a22" stroke-width="1"/>
<rect x="692.5" y="189.9" width="2" height="3.8" fill="#ffab62" stroke="#dc6a22" stroke-width="1"/>
<rect x="695.5" y="189.9" width="2" height="4.8" fill="#ffab62" stroke="#dc6a22" stroke-width="1"/>
<rect x="697.5" y="188.4" width="2" height="4.3" fill="#ffab62" stroke="#dc6a22" stroke-width="1"/>
<rect x="700.5" y="188.4" width="2" height="1.6" fill="#8a5a3a" stroke="#dc6a22" stroke-width="1"/>
<rect x="702.5" y="187.9" width="2" height="2.1" fill="#8a5a3a" stroke="#dc6a22" stroke-width="1"/>
<rect x="705.5" y="184.2" width="2" height="3.8" fill="#8a5a3a" stroke="#dc6a22" stroke-width="1"/>
<rect x="708.5" y="169.6" width="2" height="4.5" fill="#8a5a3a" stroke="#dc6a22" stroke-width="1"/>
<rect x="710.5" y="160.0" width="2" height="7.9" fill="#ffab62" stroke="#dc6a22" stroke-width="1"/>
<rect x="713.5" y="161.1" width="2" height="9.3" fill="#8a5a3a" stroke="#dc6a22" stroke-width="1"/>
<rect x="715.5" y="170.4" width="2" height="5.9" fill="#ffab62" stroke="#dc6a22" stroke-width="1"/>
<rect x="718.5" y="176.2" width="2" height="1.5" fill="#8a5a3a" stroke="#dc6a22" stroke-width="1"/>
<rect x="720.5" y="169.4" width="2" height="8.0" fill="#ffab62" stroke="#dc6a22" stroke-width="1"/>
<rect x="723.5" y="169.4" width="2" height="9.1" fill="#ffab62" stroke="#dc6a22" stroke-width="1"/>
<rect x="725.5" y="173.3" width="2" height="5.3" fill="#8a5a3a" stroke="#dc6a22" stroke-width="1"/>
<rect x="728.5" y="171.0" width="2" height="2.3" fill="#8a5a3a" stroke="#dc6a22" stroke-width="1"/>
<rect x="730.5" y="166.3" width="2" height="4.7" fill="#ffab62" stroke="#dc6a22" stroke-width="1"/>
<rect x="733.5" y="166.3" width="2" height="1.5" fill="#8a5a3a" stroke="#dc6a22" stroke-width="1"/>
<rect x="735.5" y="166.4" width="2" height="1.5" fill="#ffab62" stroke="#dc6a22" stroke-width="1"/>
<rect x="738.5" y="166.4" width="2" height="1.7" fill="#ffab62" stroke="#dc6a22" stroke-width="1"/>
<rect x="740.5" y="169.1" width="2" height="6.6" fill="#ffab62" stroke="#dc6a22" stroke-width="1"/>
<rect x="743.5" y="175.6" width="2" height="1.8" fill="#8a5a3a" stroke="#dc6a22" stroke-width="1"/>
<rect x="745.5" y="176.9" width="2" height="1.5" fill="#8a5a3a" stroke="#dc6a22" stroke-width="1"/>
<rect x="748.5" y="176.9" width="2" height="8.4" fill="#8a5a3a" stroke="#dc6a22" stroke-width="1"/>
<rect x="750.5" y="185.3" width="2" height="5.7" fill="#ffab62" stroke="#dc6a22" stroke-width="1"/>
<rect x="753.5" y="198.9" width="2" height="3.9" fill="#8a5a3a" stroke="#dc6a22" stroke-width="1"/>
<rect x="755.5" y="204.9" width="2" height="5.8" fill="#ffab62" stroke="#dc6a22" stroke-width="1"/>
<rect x="758.5" y="210.7" width="2" height="3.8" fill="#ffab62" stroke="#dc6a22" stroke-width="1"/>
<rect x="760.5" y="214.5" width="2" height="2.8" fill="#8a5a3a" stroke="#dc6a22" stroke-width="1"/>
<rect x="763.5" y="214.1" width="2" height="3.2" fill="#8a5a3a" stroke="#dc6a22" stroke-width="1"/>
<rect x="765.5" y="214.1" width="2" height="1.5" fill="#8a5a3a" stroke="#dc6a22" stroke-width="1"/>
<rect x="768.5" y="215.2" width="2" height="2.5" fill="#8a5a3a" stroke="#dc6a22" stroke-width="1"/>
<rect x="771.5" y="222.2" width="2" height="12.5" fill="#8a5a3a" stroke="#dc6a22" stroke-width="1"/>
<rect x="773.5" y="233.5" width="2" height="1.5" fill="#ffab62" stroke="#dc6a22" stroke-width="1"/>
<rect x="776.5" y="233.5" width="2" height="2.8" fill="#8a5a3a" stroke="#dc6a22" stroke-width="1"/>
<rect x="778.5" y="236.3" width="2" height="1.5" fill="#8a5a3a" stroke="#dc6a22" stroke-width="1"/>
<rect x="781.5" y="237.6" width="2" height="2.3" fill="#8a5a3a" stroke="#dc6a22" stroke-width="1"/>
<rect x="783.5" y="235.6" width="2" height="4.3" fill="#ffab62" stroke="#dc6a22" stroke-width="1"/>
<rect x="786.5" y="232.1" width="2" height="3.4" fill="#8a5a3a" stroke="#dc6a22" stroke-width="1"/>
<rect x="788.5" y="232.1" width="2" height="4.3" fill="#8a5a3a" stroke="#dc6a22" stroke-width="1"/>
<rect x="791.5" y="236.4" width="2" height="1.5" fill="#ffab62" stroke="#dc6a22" stroke-width="1"/>
<rect x="793.5" y="237.3" width="2" height="4.7" fill="#ffab62" stroke="#dc6a22" stroke-width="1"/>
<rect x="796.5" y="229.6" width="2" height="11.6" fill="#8a5a3a" stroke="#dc6a22" stroke-width="1"/>
<rect x="798.5" y="229.6" width="2" height="1.8" fill="#ffab62" stroke="#dc6a22" stroke-width="1"/>
<rect x="801.5" y="231.5" width="2" height="3.6" fill="#8a5a3a" stroke="#dc6a22" stroke-width="1"/>
<rect x="803.5" y="231.0" width="2" height="2.5" fill="#ffab62" stroke="#dc6a22" stroke-width="1"/>
<rect x="806.5" y="230.2" width="2" height="1.5" fill="#ffab62" stroke="#dc6a22" stroke-width="1"/>
<rect x="808.5" y="228.3" width="2" height="1.9" fill="#ffab62" stroke="#dc6a22" stroke-width="1"/>
<rect x="811.5" y="219.1" width="2" height="9.2" fill="#8a5a3a" stroke="#dc6a22" stroke-width="1"/>
<rect x="813.5" y="225.9" width="2" height="6.3" fill="#ffab62" stroke="#dc6a22" stroke-width="1"/>
<rect x="816.5" y="232.2" width="2" height="7.3" fill="#ffab62" stroke="#dc6a22" stroke-width="1"/>
<rect x="818.5" y="233.4" width="2" height="6.1" fill="#ffab62" stroke="#dc6a22" stroke-width="1"/>
<rect x="821.5" y="228.3" width="2" height="5.2" fill="#ffab62" stroke="#dc6a22" stroke-width="1"/>
<path d="M135.7,258.7 C138.5,256.7 147.6,250.5 152.7,246.8 C157.8,243.1 161.2,240.8 166.3,236.6 C171.4,232.3 178.2,226.1 183.3,221.3 C188.4,216.5 193.2,211.4 196.9,207.7 C200.6,204.0 202.4,202.0 205.4,199.2 C208.4,196.4 208.8,194.5 215.0,190.7 C221.2,186.8 236.5,179.2 242.3,176.1 C248.1,173.0 247.1,173.8 250.0,172.0 C252.9,170.2 256.9,167.3 260.0,165.1 C263.1,162.9 264.0,161.2 268.5,158.9 C273.0,156.6 280.8,153.2 287.0,151.5 C293.2,149.8 299.4,149.6 305.6,148.7 C311.8,147.8 317.8,146.8 324.0,146.0 C330.2,145.2 336.4,144.6 342.6,144.0 C348.8,143.4 354.8,142.8 361.0,142.2 C367.2,141.6 374.7,141.3 379.6,140.4 C384.6,139.5 386.7,138.5 390.7,136.7 C394.7,134.8 399.4,130.7 403.7,129.3 C408.0,127.9 412.3,129.1 416.7,128.3 C421.1,127.5 424.7,125.1 430.0,124.5 C435.3,123.9 442.3,124.5 448.5,124.9 C454.7,125.3 460.8,127.0 467.0,126.7 C473.2,126.4 479.4,124.7 485.6,123.0 C491.8,121.3 498.6,119.1 504.1,116.6 C509.7,114.1 514.0,111.1 518.9,108.2 C523.8,105.3 528.8,102.2 533.7,99.0 C538.6,95.8 543.6,91.4 548.5,88.8 C553.4,86.2 559.0,84.3 563.3,83.2 C567.6,82.1 569.8,82.5 574.4,82.3 C579.0,82.1 586.1,81.8 591.0,82.3 C595.9,82.8 598.7,83.3 603.5,85.4 C608.3,87.5 615.0,91.1 620.0,95.0 C625.0,98.9 628.8,104.7 633.3,108.9 C637.8,113.1 642.6,114.9 647.2,120.0 C651.8,125.1 656.0,133.8 661.1,139.4 C666.2,145.0 672.2,149.6 677.8,153.3 C683.3,157.0 688.8,159.6 694.4,161.7 C700.0,163.8 705.1,164.9 711.1,165.8 C717.1,166.7 724.1,166.7 730.6,167.2 C737.1,167.7 744.5,166.8 750.0,168.6 C755.5,170.4 758.8,174.4 763.9,178.3 C769.0,182.2 774.6,188.0 780.6,192.2 C786.6,196.4 793.1,200.5 800.0,203.3 C806.9,206.1 818.5,208.0 822.2,208.9" fill="none" stroke="#b52222" stroke-width="1.3"/>
<path d="M102.0,258.7 C104.5,257.3 112.5,252.5 117.0,250.2 C121.5,247.9 125.3,247.3 129.0,245.0 C132.7,242.7 135.4,240.0 139.1,236.6 C142.8,233.2 147.9,227.7 151.0,224.7 C154.1,221.7 154.4,221.6 157.8,218.8 C161.2,216.0 166.9,212.1 171.4,207.7 C175.9,203.3 180.8,197.2 185.0,192.4 C189.2,187.6 193.5,183.4 196.9,178.9 C200.3,174.4 202.4,169.6 205.4,165.3 C208.4,161.1 212.6,155.9 215.0,153.4 C217.4,150.9 216.8,151.6 220.0,150.5 C223.2,149.4 230.6,147.8 234.3,147.0 C238.0,146.2 239.7,146.6 242.3,146.0 C244.9,145.4 246.9,145.1 250.0,143.5 C253.1,141.9 257.0,139.1 261.0,136.7 C265.0,134.3 270.0,130.3 274.0,129.0 C278.0,127.7 281.8,128.3 285.2,129.0 C288.6,129.7 291.0,132.0 294.4,133.0 C297.8,134.0 301.3,134.5 305.6,134.8 C309.9,135.1 316.7,134.2 320.4,134.8 C324.1,135.4 325.0,137.4 327.8,138.5 C330.6,139.6 333.9,141.0 337.0,141.3 C340.1,141.6 342.9,140.7 346.3,140.4 C349.7,140.1 354.3,139.9 357.4,139.4 C360.5,138.9 361.1,138.4 364.8,137.6 C368.5,136.8 375.3,136.2 379.6,134.8 C383.9,133.4 387.6,131.5 390.7,129.3 C393.8,127.2 395.6,124.5 398.1,121.9 C400.6,119.3 403.5,114.8 405.6,113.5 C407.8,112.2 408.5,113.5 411.0,114.4 C413.5,115.3 417.2,119.3 420.4,119.0 C423.6,118.7 426.6,112.8 430.0,112.5 C433.4,112.2 437.4,115.8 441.1,117.5 C444.8,119.2 449.1,121.5 452.2,123.0 C455.3,124.5 456.5,126.2 459.6,126.7 C462.7,127.2 467.0,126.6 470.7,125.8 C474.4,125.0 478.2,123.9 481.9,122.1 C485.6,120.2 489.3,116.9 493.0,114.7 C496.7,112.5 500.7,111.4 504.1,109.1 C507.5,106.8 510.2,103.7 513.3,100.8 C516.4,97.9 519.2,95.3 522.6,91.6 C526.0,87.9 530.3,82.6 533.7,78.6 C537.1,74.6 540.2,70.1 543.0,67.5 C545.8,64.9 547.0,63.7 550.4,62.9 C553.8,62.1 559.9,62.5 563.3,62.9 C566.7,63.3 567.6,64.4 570.7,65.6 C573.8,66.8 577.7,68.4 581.9,70.3 C586.1,72.2 592.4,74.4 596.0,76.7 C599.6,79.0 601.0,81.6 603.5,84.0 C606.0,86.4 608.9,88.3 611.0,91.0 C613.1,93.7 614.2,96.7 616.0,100.0 C617.8,103.3 619.1,105.8 622.0,111.0 C624.9,116.2 629.6,125.9 633.3,131.1 C637.0,136.3 641.1,138.0 644.4,142.2 C647.6,146.4 649.5,150.5 652.8,156.1 C656.0,161.7 660.2,170.3 663.9,175.6 C667.6,180.9 671.3,185.0 675.0,188.0 C678.7,191.0 681.5,192.9 686.1,193.6 C690.7,194.3 697.7,193.8 702.8,192.2 C707.9,190.6 713.0,185.3 716.7,183.9 C720.4,182.5 721.3,185.1 725.0,183.9 C728.7,182.7 735.2,177.8 738.9,176.9 C742.6,176.0 744.4,176.2 747.2,178.3 C750.0,180.4 751.4,184.8 755.6,189.4 C759.8,194.0 766.7,201.0 772.2,206.1 C777.8,211.2 783.3,216.5 788.9,220.0 C794.5,223.5 800.0,225.4 805.6,227.0 C811.2,228.6 819.0,229.5 822.2,229.7 C825.4,229.9 824.5,228.5 825.0,228.3" fill="none" stroke="#1616cc" stroke-width="1.3"/>
</g>
<rect x="13.5" y="39.5" width="873" height="220" fill="none" stroke="#aebfcd" stroke-width="1"/>
<rect x="13.5" y="265.5" width="873" height="59" fill="none" stroke="#aebfcd" stroke-width="1"/>
<rect x="13.5" y="330.5" width="873" height="73" fill="none" stroke="#aebfcd" stroke-width="1"/>
<rect x="14" y="40" width="275" height="13" fill="#3b4149"/>
<text x="14.7" y="51.5" font-family="Liberation Sans" font-size="10.3" fill="#1c1ce0" textLength="134" lengthAdjust="spacingAndGlyphs">Exponential_Moving_Average</text>
<text x="153.6" y="51.5" font-family="Liberation Sans" font-size="10.3" fill="#e01c1c" textLength="134" lengthAdjust="spacingAndGlyphs">Exponential_Moving_Average</text>
<rect x="13" y="39" width="31" height="22" fill="#efefef"/>
<rect x="13" y="39" width="31" height="4" fill="url(#legtop)"/>
<rect x="17.5" y="47.5" width="9" height="9" rx="1.5" fill="url(#sqr)" stroke="#901010"/>
<rect x="30.5" y="47.5" width="9" height="9" rx="1.5" fill="url(#sqb)" stroke="#105090"/>
<text x="15.5" y="277" font-family="Liberation Sans" font-size="11" fill="#1c2470" textLength="28" lengthAdjust="spacingAndGlyphs">MACD</text>
<g clip-path="url(#cmacd)">
<rect x="14" y="289.2" width="2" height="6.5" fill="#d01a1a" opacity="0.85"/>
<rect x="17" y="289.4" width="2" height="6.2" fill="#d01a1a" opacity="0.85"/>
<rect x="85" y="290.9" width="2" height="1.6" fill="#d01a1a" opacity="0.85"/>
<rect x="88" y="290.8" width="2" height="1.7" fill="#d01a1a" opacity="0.85"/>
<rect x="91" y="291.6" width="2" height="1.0" fill="#d01a1a" opacity="0.85"/>
<rect x="94" y="291.0" width="2" height="1.5" fill="#d01a1a" opacity="0.85"/>
<rect x="97" y="291.3" width="2" height="1.2" fill="#d01a1a" opacity="0.85"/>
<rect x="110" y="291.6" width="2" height="1.0" fill="#d01a1a" opacity="0.85"/>
<rect x="113" y="291.6" width="2" height="1.0" fill="#d01a1a" opacity="0.85"/>
<rect x="116" y="291.6" width="2" height="1.0" fill="#d01a1a" opacity="0.85"/>
<rect x="119" y="292.1" width="2" height="1.0" fill="#d01a1a" opacity="0.85"/>
<rect x="122" y="291.6" width="2" height="1.0" fill="#d01a1a" opacity="0.85"/>
<rect x="160" y="291.6" width="2" height="1.0" fill="#d01a1a" opacity="0.85"/>
<rect x="163" y="291.5" width="2" height="1.0" fill="#d01a1a" opacity="0.85"/>
<rect x="166" y="292.0" width="2" height="1.0" fill="#d01a1a" opacity="0.85"/>
<rect x="169" y="292.0" width="2" height="1.0" fill="#d01a1a" opacity="0.85"/>
<rect x="172" y="292.0" width="2" height="1.0" fill="#d01a1a" opacity="0.85"/>
<rect x="175" y="292.1" width="2" height="1.0" fill="#d01a1a" opacity="0.85"/>
<rect x="178" y="291.6" width="2" height="1.0" fill="#d01a1a" opacity="0.85"/>
<rect x="205" y="289.8" width="2" height="2.7" fill="#d01a1a" opacity="0.85"/>
<rect x="208" y="290.2" width="2" height="2.3" fill="#d01a1a" opacity="0.85"/>
<rect x="211" y="289.8" width="2" height="2.7" fill="#d01a1a" opacity="0.85"/>
<rect x="214" y="290.2" width="2" height="2.3" fill="#d01a1a" opacity="0.85"/>
<rect x="225" y="292.5" width="2" height="1.7" fill="#d01a1a" opacity="0.85"/>
<rect x="228" y="292.5" width="2" height="1.4" fill="#d01a1a" opacity="0.85"/>
<rect x="231" y="292.5" width="2" height="1.4" fill="#d01a1a" opacity="0.85"/>
<rect x="234" y="292.5" width="2" height="2.6" fill="#d01a1a" opacity="0.85"/>
<rect x="237" y="292.5" width="2" height="1.6" fill="#d01a1a" opacity="0.85"/>
<rect x="240" y="292.5" width="2" height="1.8" fill="#d01a1a" opacity="0.85"/>
<rect x="243" y="292.5" width="2" height="2.0" fill="#d01a1a" opacity="0.85"/>
<rect x="246" y="292.5" width="2" height="1.2" fill="#d01a1a" opacity="0.85"/>
<rect x="249" y="292.5" width="2" height="1.7" fill="#d01a1a" opacity="0.85"/>
<rect x="252" y="292.5" width="2" height="1.7" fill="#d01a1a" opacity="0.85"/>
<rect x="255" y="292.5" width="2" height="2.5" fill="#d01a1a" opacity="0.85"/>
<rect x="258" y="292.5" width="2" height="1.9" fill="#d01a1a" opacity="0.85"/>
<rect x="261" y="292.5" width="2" height="1.8" fill="#d01a1a" opacity="0.85"/>
<rect x="284" y="292.5" width="2" height="2.9" fill="#d01a1a" opacity="0.85"/>
<rect x="287" y="292.5" width="2" height="2.1" fill="#d01a1a" opacity="0.85"/>
<rect x="290" y="292.5" width="2" height="2.7" fill="#d01a1a" opacity="0.85"/>
<rect x="340" y="292.5" width="2" height="1.0" fill="#d01a1a" opacity="0.85"/>
<rect x="343" y="292.5" width="2" height="1.0" fill="#d01a1a" opacity="0.85"/>
<rect x="346" y="292.5" width="2" height="1.0" fill="#d01a1a" opacity="0.85"/>
<rect x="349" y="292.5" width="2" height="1.0" fill="#d01a1a" opacity="0.85"/>
<rect x="352" y="292.5" width="2" height="1.0" fill="#d01a1a" opacity="0.85"/>
<rect x="385" y="291.3" width="2" height="1.2" fill="#d01a1a" opacity="0.85"/>
<rect x="388" y="290.9" width="2" height="1.6" fill="#d01a1a" opacity="0.85"/>
<rect x="391" y="291.1" width="2" height="1.4" fill="#d01a1a" opacity="0.85"/>
<rect x="394" y="291.4" width="2" height="1.1" fill="#d01a1a" opacity="0.85"/>
<rect x="395" y="289.7" width="2" height="2.8" fill="#d01a1a" opacity="0.85"/>
<rect x="398" y="291.1" width="2" height="1.4" fill="#d01a1a" opacity="0.85"/>
<rect x="401" y="289.8" width="2" height="2.7" fill="#d01a1a" opacity="0.85"/>
<rect x="404" y="291.0" width="2" height="1.5" fill="#d01a1a" opacity="0.85"/>
<rect x="410" y="292.5" width="2" height="1.2" fill="#d01a1a" opacity="0.85"/>
<rect x="413" y="292.5" width="2" height="1.6" fill="#d01a1a" opacity="0.85"/>
<rect x="416" y="292.5" width="2" height="2.6" fill="#d01a1a" opacity="0.85"/>
<rect x="419" y="292.5" width="2" height="3.0" fill="#d01a1a" opacity="0.85"/>
<rect x="422" y="292.5" width="2" height="1.2" fill="#d01a1a" opacity="0.85"/>
<rect x="425" y="292.5" width="2" height="2.1" fill="#d01a1a" opacity="0.85"/>
<rect x="428" y="292.5" width="2" height="2.1" fill="#d01a1a" opacity="0.85"/>
<rect x="440" y="292.5" width="2" height="1.8" fill="#d01a1a" opacity="0.85"/>
<rect x="443" y="292.5" width="2" height="1.0" fill="#d01a1a" opacity="0.85"/>
<rect x="446" y="292.5" width="2" height="1.4" fill="#d01a1a" opacity="0.85"/>
<rect x="449" y="292.5" width="2" height="1.2" fill="#d01a1a" opacity="0.85"/>
<rect x="480" y="289.8" width="2" height="2.7" fill="#d01a1a" opacity="0.85"/>
<rect x="483" y="290.8" width="2" height="1.7" fill="#d01a1a" opacity="0.85"/>
<rect x="486" y="289.6" width="2" height="2.9" fill="#d01a1a" opacity="0.85"/>
<rect x="489" y="290.8" width="2" height="1.7" fill="#d01a1a" opacity="0.85"/>
<rect x="492" y="290.9" width="2" height="1.6" fill="#d01a1a" opacity="0.85"/>
<rect x="495" y="290.0" width="2" height="2.5" fill="#d01a1a" opacity="0.85"/>
<rect x="498" y="290.4" width="2" height="2.1" fill="#d01a1a" opacity="0.85"/>
<rect x="501" y="291.1" width="2" height="1.4" fill="#d01a1a" opacity="0.85"/>
<rect x="504" y="290.2" width="2" height="2.3" fill="#d01a1a" opacity="0.85"/>
<rect x="507" y="291.2" width="2" height="1.3" fill="#d01a1a" opacity="0.85"/>
<rect x="510" y="289.9" width="2" height="2.6" fill="#d01a1a" opacity="0.85"/>
<rect x="513" y="290.0" width="2" height="2.5" fill="#d01a1a" opacity="0.85"/>
<rect x="516" y="289.9" width="2" height="2.6" fill="#d01a1a" opacity="0.85"/>
<rect x="519" y="290.2" width="2" height="2.3" fill="#d01a1a" opacity="0.85"/>
<rect x="522" y="290.7" width="2" height="1.8" fill="#d01a1a" opacity="0.85"/>
<rect x="525" y="290.6" width="2" height="1.9" fill="#d01a1a" opacity="0.85"/>
<rect x="528" y="290.6" width="2" height="1.9" fill="#d01a1a" opacity="0.85"/>
<rect x="531" y="289.7" width="2" height="2.8" fill="#d01a1a" opacity="0.85"/>
<rect x="534" y="291.1" width="2" height="1.4" fill="#d01a1a" opacity="0.85"/>
<rect x="537" y="289.7" width="2" height="2.8" fill="#d01a1a" opacity="0.85"/>
<rect x="555" y="292.5" width="2" height="2.1" fill="#d01a1a" opacity="0.85"/>
<rect x="558" y="292.5" width="2" height="2.6" fill="#d01a1a" opacity="0.85"/>
<rect x="561" y="292.5" width="2" height="2.8" fill="#d01a1a" opacity="0.85"/>
<rect x="564" y="292.5" width="2" height="4.7" fill="#d01a1a" opacity="0.85"/>
<rect x="567" y="292.5" width="2" height="3.5" fill="#d01a1a" opacity="0.85"/>
<rect x="570" y="292.5" width="2" height="3.1" fill="#d01a1a" opacity="0.85"/>
<rect x="573" y="292.5" width="2" height="4.7" fill="#d01a1a" opacity="0.85"/>
<rect x="576" y="292.5" width="2" height="2.7" fill="#d01a1a" opacity="0.85"/>
<rect x="579" y="292.5" width="2" height="3.4" fill="#d01a1a" opacity="0.85"/>
<rect x="582" y="292.5" width="2" height="3.6" fill="#d01a1a" opacity="0.85"/>
<rect x="585" y="292.5" width="2" height="4.3" fill="#d01a1a" opacity="0.85"/>
<rect x="600" y="292.5" width="2" height="5.1" fill="#d01a1a" opacity="0.85"/>
<rect x="603" y="292.5" width="2" height="4.7" fill="#d01a1a" opacity="0.85"/>
<rect x="606" y="292.5" width="2" height="3.7" fill="#d01a1a" opacity="0.85"/>
<rect x="609" y="292.5" width="2" height="3.6" fill="#d01a1a" opacity="0.85"/>
<rect x="612" y="292.5" width="2" height="3.0" fill="#d01a1a" opacity="0.85"/>
<rect x="615" y="292.5" width="2" height="5.4" fill="#d01a1a" opacity="0.85"/>
<rect x="618" y="292.5" width="2" height="4.8" fill="#d01a1a" opacity="0.85"/>
<rect x="621" y="292.5" width="2" height="5.1" fill="#d01a1a" opacity="0.85"/>
<rect x="624" y="292.5" width="2" height="3.0" fill="#d01a1a" opacity="0.85"/>
<rect x="627" y="292.5" width="2" height="4.0" fill="#d01a1a" opacity="0.85"/>
<rect x="630" y="292.5" width="2" height="5.2" fill="#d01a1a" opacity="0.85"/>
<rect x="633" y="292.5" width="2" height="4.5" fill="#d01a1a" opacity="0.85"/>
<rect x="636" y="292.5" width="2" height="2.9" fill="#d01a1a" opacity="0.85"/>
<rect x="639" y="292.5" width="2" height="4.1" fill="#d01a1a" opacity="0.85"/>
<rect x="645" y="292.5" width="2" height="2.8" fill="#d01a1a" opacity="0.85"/>
<rect x="648" y="292.5" width="2" height="1.6" fill="#d01a1a" opacity="0.85"/>
<rect x="651" y="292.5" width="2" height="1.5" fill="#d01a1a" opacity="0.85"/>
<rect x="654" y="292.5" width="2" height="1.7" fill="#d01a1a" opacity="0.85"/>
<rect x="657" y="292.5" width="2" height="2.5" fill="#d01a1a" opacity="0.85"/>
<rect x="660" y="292.5" width="2" height="2.7" fill="#d01a1a" opacity="0.85"/>
<rect x="663" y="292.5" width="2" height="1.5" fill="#d01a1a" opacity="0.85"/>
<rect x="666" y="292.5" width="2" height="1.5" fill="#d01a1a" opacity="0.85"/>
<rect x="669" y="292.5" width="2" height="1.6" fill="#d01a1a" opacity="0.85"/>
<rect x="678" y="290.1" width="2" height="2.4" fill="#d01a1a" opacity="0.85"/>
<rect x="681" y="289.6" width="2" height="2.9" fill="#d01a1a" opacity="0.85"/>
<rect x="684" y="290.5" width="2" height="2.0" fill="#d01a1a" opacity="0.85"/>
<rect x="687" y="290.1" width="2" height="2.4" fill="#d01a1a" opacity="0.85"/>
<rect x="690" y="290.4" width="2" height="2.1" fill="#d01a1a" opacity="0.85"/>
<rect x="693" y="288.6" width="2" height="3.9" fill="#d01a1a" opacity="0.85"/>
<rect x="696" y="289.2" width="2" height="3.3" fill="#d01a1a" opacity="0.85"/>
<rect x="699" y="290.7" width="2" height="1.8" fill="#d01a1a" opacity="0.85"/>
<rect x="702" y="288.6" width="2" height="3.9" fill="#d01a1a" opacity="0.85"/>
<rect x="705" y="290.7" width="2" height="1.8" fill="#d01a1a" opacity="0.85"/>
<rect x="708" y="290.0" width="2" height="2.5" fill="#d01a1a" opacity="0.85"/>
<rect x="711" y="288.5" width="2" height="4.0" fill="#d01a1a" opacity="0.85"/>
<rect x="714" y="289.0" width="2" height="3.5" fill="#d01a1a" opacity="0.85"/>
<rect x="717" y="289.1" width="2" height="3.4" fill="#d01a1a" opacity="0.85"/>
<rect x="720" y="289.9" width="2" height="2.6" fill="#d01a1a" opacity="0.85"/>
<rect x="750" y="292.5" width="2" height="2.1" fill="#d01a1a" opacity="0.85"/>
<rect x="753" y="292.5" width="2" height="3.1" fill="#d01a1a" opacity="0.85"/>
<rect x="756" y="292.5" width="2" height="1.9" fill="#d01a1a" opacity="0.85"/>
<rect x="759" y="292.5" width="2" height="2.1" fill="#d01a1a" opacity="0.85"/>
<rect x="762" y="292.5" width="2" height="2.5" fill="#d01a1a" opacity="0.85"/>
<rect x="765" y="292.5" width="2" height="1.7" fill="#d01a1a" opacity="0.85"/>
<rect x="768" y="292.5" width="2" height="2.6" fill="#d01a1a" opacity="0.85"/>
<rect x="771" y="292.5" width="2" height="3.5" fill="#d01a1a" opacity="0.85"/>
<rect x="774" y="292.5" width="2" height="3.3" fill="#d01a1a" opacity="0.85"/>
<rect x="777" y="292.5" width="2" height="2.8" fill="#d01a1a" opacity="0.85"/>
<rect x="780" y="292.5" width="2" height="3.1" fill="#d01a1a" opacity="0.85"/>
<rect x="783" y="292.5" width="2" height="2.7" fill="#d01a1a" opacity="0.85"/>
<rect x="786" y="292.5" width="2" height="1.9" fill="#d01a1a" opacity="0.85"/>
<rect x="789" y="292.5" width="2" height="3.0" fill="#d01a1a" opacity="0.85"/>
<rect x="792" y="292.5" width="2" height="2.6" fill="#d01a1a" opacity="0.85"/>
<rect x="797" y="290.0" width="2" height="2.5" fill="#d01a1a" opacity="0.85"/>
<rect x="800" y="289.7" width="2" height="2.8" fill="#d01a1a" opacity="0.85"/>
<rect x="803" y="290.5" width="2" height="2.0" fill="#d01a1a" opacity="0.85"/>
<rect x="806" y="290.3" width="2" height="2.2" fill="#d01a1a" opacity="0.85"/>
<rect x="809" y="290.0" width="2" height="2.5" fill="#d01a1a" opacity="0.85"/>
<rect x="812" y="290.5" width="2" height="2.0" fill="#d01a1a" opacity="0.85"/>
<rect x="815" y="290.9" width="2" height="1.6" fill="#d01a1a" opacity="0.85"/>
<rect x="818" y="290.0" width="2" height="2.5" fill="#d01a1a" opacity="0.85"/>
<rect x="821" y="289.7" width="2" height="2.8" fill="#d01a1a" opacity="0.85"/>
<rect x="824" y="289.9" width="2" height="2.6" fill="#d01a1a" opacity="0.85"/>
<path d="M14.0,295.0 C15.0,294.3 15.7,291.4 20.0,291.0 C24.3,290.6 34.2,292.1 40.0,292.5 C45.8,292.9 50.7,293.3 55.0,293.5 C59.3,293.7 62.7,294.0 66.0,293.5 C69.3,293.0 71.8,292.2 75.0,290.5 C78.2,288.8 81.7,285.3 85.0,283.4 C88.3,281.4 92.5,279.3 95.0,278.8 C97.5,278.3 97.5,280.3 100.0,280.6 C102.5,280.9 106.7,280.2 110.0,280.6 C113.3,281.0 115.8,282.4 120.0,282.7 C124.2,283.0 131.3,282.9 135.0,282.7 C138.7,282.5 139.5,282.2 142.0,281.4 C144.5,280.6 147.0,278.7 150.0,277.8 C153.0,276.9 150.8,277.6 160.0,276.2 C169.2,274.8 195.8,270.4 205.0,269.2 C214.2,268.0 211.7,268.3 215.0,269.2 C218.3,270.1 221.7,272.6 225.0,274.4 C228.3,276.2 231.7,278.5 235.0,280.2 C238.3,281.9 241.7,284.1 245.0,284.8 C248.3,285.5 250.8,284.7 255.0,284.1 C259.2,283.6 265.8,281.7 270.0,281.5 C274.2,281.3 276.7,281.5 280.0,282.8 C283.3,284.1 286.7,287.9 290.0,289.3 C293.3,290.7 295.0,290.4 300.0,291.0 C305.0,291.6 314.2,291.7 320.0,292.6 C325.8,293.5 330.8,296.2 335.0,296.5 C339.2,296.8 336.7,295.9 345.0,294.6 C353.3,293.3 375.8,291.3 385.0,288.7 C394.2,286.1 396.7,280.6 400.0,279.0 C403.3,277.4 401.7,277.1 405.0,279.0 C408.3,280.9 415.5,289.2 420.0,290.6 C424.5,292.0 428.7,287.3 432.0,287.4 C435.3,287.5 437.0,290.0 440.0,291.3 C443.0,292.6 446.7,293.9 450.0,295.0 C453.3,296.1 455.8,297.8 460.0,297.8 C464.2,297.8 470.8,296.6 475.0,295.2 C479.2,293.8 480.8,290.9 485.0,289.3 C489.2,287.7 494.5,287.3 500.0,285.4 C505.5,283.4 513.0,279.0 518.0,277.6 C523.0,276.2 525.8,277.8 530.0,277.0 C534.2,276.2 538.8,273.0 543.0,273.0 C547.2,273.0 550.5,274.9 555.0,277.0 C559.5,279.1 566.7,283.1 570.0,285.4 C573.3,287.7 571.7,288.8 575.0,290.6 C578.3,292.5 585.8,295.0 590.0,296.5 C594.2,298.0 596.7,298.5 600.0,299.8 C603.3,301.1 605.8,302.0 610.0,304.3 C614.2,306.6 621.3,310.9 625.0,313.4 C628.7,315.9 629.5,319.1 632.0,319.3 C634.5,319.5 637.0,315.4 640.0,314.7 C643.0,314.0 647.5,314.4 650.0,315.4 C652.5,316.4 652.5,319.6 655.0,320.6 C657.5,321.6 661.7,321.6 665.0,321.2 C668.3,320.8 671.7,319.9 675.0,318.0 C678.3,316.1 680.8,312.5 685.0,309.5 C689.2,306.5 695.8,302.7 700.0,299.8 C704.2,296.9 706.7,293.6 710.0,292.0 C713.3,290.4 715.8,290.6 720.0,290.0 C724.2,289.4 730.8,288.9 735.0,288.7 C739.2,288.4 742.8,288.4 745.0,288.5 C747.2,288.6 746.0,287.8 748.0,289.3 C750.0,290.9 754.2,296.0 757.0,297.8 C759.8,299.6 762.3,299.4 765.0,300.4 C767.7,301.4 770.5,302.3 773.0,303.7 C775.5,305.1 778.0,308.2 780.0,308.9 C782.0,309.5 782.5,307.9 785.0,307.6 C787.5,307.3 790.8,308.1 795.0,307.0 C799.2,305.9 805.8,302.0 810.0,301.0 C814.2,300.0 817.5,301.4 820.0,301.0 C822.5,300.6 824.2,298.9 825.0,298.5" fill="none" stroke="#0e0e5a" stroke-width="1.4"/>
<path d="M14.0,290.0 C15.0,290.1 15.7,290.4 20.0,290.5 C24.3,290.6 34.2,290.2 40.0,290.5 C45.8,290.8 50.7,291.5 55.0,292.0 C59.3,292.5 62.7,293.5 66.0,293.5 C69.3,293.5 71.8,292.8 75.0,292.0 C78.2,291.2 81.7,290.0 85.0,288.7 C88.3,287.4 91.7,285.3 95.0,284.1 C98.3,282.9 101.7,282.1 105.0,281.4 C108.3,280.7 111.3,280.0 115.0,280.0 C118.7,280.0 122.5,281.2 127.0,281.4 C131.5,281.6 138.2,281.8 142.0,281.4 C145.8,281.0 145.3,279.9 150.0,279.0 C154.7,278.1 163.3,277.1 170.0,276.3 C176.7,275.5 185.0,274.9 190.0,274.4 C195.0,273.8 196.7,273.6 200.0,273.0 C203.3,272.4 207.5,271.1 210.0,270.5 C212.5,269.9 212.5,269.3 215.0,269.5 C217.5,269.7 221.7,270.8 225.0,271.8 C228.3,272.8 231.7,274.2 235.0,275.7 C238.3,277.2 241.7,279.8 245.0,280.9 C248.3,282.0 251.7,282.4 255.0,282.6 C258.3,282.8 260.8,282.4 265.0,282.2 C269.2,282.0 275.8,281.1 280.0,281.5 C284.2,281.9 286.7,283.7 290.0,284.8 C293.3,285.9 295.0,286.9 300.0,288.0 C305.0,289.1 314.2,290.4 320.0,291.3 C325.8,292.2 330.8,292.8 335.0,293.2 C339.2,293.6 340.8,294.1 345.0,293.9 C349.2,293.7 355.0,292.6 360.0,292.0 C365.0,291.4 370.8,290.8 375.0,290.4 C379.2,289.9 381.7,290.1 385.0,289.3 C388.3,288.5 391.3,286.7 395.0,285.4 C398.7,284.1 402.8,281.3 407.0,281.3 C411.2,281.3 415.8,284.6 420.0,285.4 C424.2,286.2 428.7,285.4 432.0,286.0 C435.3,286.6 437.0,287.8 440.0,288.7 C443.0,289.6 446.7,290.6 450.0,291.5 C453.3,292.4 455.8,293.6 460.0,293.9 C464.2,294.2 470.0,293.8 475.0,293.2 C480.0,292.6 485.0,291.8 490.0,290.6 C495.0,289.4 500.0,287.6 505.0,286.1 C510.0,284.6 515.0,282.9 520.0,281.5 C525.0,280.1 530.8,278.8 535.0,277.6 C539.2,276.4 541.7,274.7 545.0,274.4 C548.3,274.1 550.8,274.5 555.0,275.7 C559.2,276.9 565.8,279.6 570.0,281.5 C574.2,283.4 576.7,285.6 580.0,287.4 C583.3,289.1 586.7,290.9 590.0,292.0 C593.3,293.1 596.7,292.9 600.0,294.0 C603.3,295.1 606.7,297.0 610.0,298.5 C613.3,300.0 616.7,301.1 620.0,303.0 C623.3,304.9 627.0,308.5 630.0,310.2 C633.0,311.9 634.7,312.9 638.0,313.4 C641.3,313.9 646.3,312.8 650.0,313.4 C653.7,313.9 656.7,315.8 660.0,316.7 C663.3,317.6 667.5,318.3 670.0,318.6 C672.5,318.9 671.7,319.8 675.0,318.6 C678.3,317.4 685.0,314.0 690.0,311.5 C695.0,309.0 700.8,306.3 705.0,303.7 C709.2,301.1 711.7,297.8 715.0,295.9 C718.3,294.0 720.8,293.8 725.0,292.6 C729.2,291.5 736.2,289.8 740.0,289.0 C743.8,288.2 745.5,287.6 748.0,288.0 C750.5,288.4 752.2,290.2 755.0,291.3 C757.8,292.4 761.7,293.2 765.0,294.6 C768.3,296.0 771.7,298.2 775.0,299.8 C778.3,301.4 781.7,303.3 785.0,304.3 C788.3,305.3 791.7,305.5 795.0,305.6 C798.3,305.7 801.7,305.6 805.0,305.0 C808.3,304.4 811.7,302.7 815.0,301.7 C818.3,300.7 823.3,299.5 825.0,299.1" fill="none" stroke="#ee1515" stroke-width="3.2" stroke-linejoin="round"/>
<path d="M14.0,290.0 C15.0,290.1 15.7,290.4 20.0,290.5 C24.3,290.6 34.2,290.2 40.0,290.5 C45.8,290.8 50.7,291.5 55.0,292.0 C59.3,292.5 62.7,293.5 66.0,293.5 C69.3,293.5 71.8,292.8 75.0,292.0 C78.2,291.2 81.7,290.0 85.0,288.7 C88.3,287.4 91.7,285.3 95.0,284.1 C98.3,282.9 101.7,282.1 105.0,281.4 C108.3,280.7 111.3,280.0 115.0,280.0 C118.7,280.0 122.5,281.2 127.0,281.4 C131.5,281.6 138.2,281.8 142.0,281.4 C145.8,281.0 145.3,279.9 150.0,279.0 C154.7,278.1 163.3,277.1 170.0,276.3 C176.7,275.5 185.0,274.9 190.0,274.4 C195.0,273.8 196.7,273.6 200.0,273.0 C203.3,272.4 207.5,271.1 210.0,270.5 C212.5,269.9 212.5,269.3 215.0,269.5 C217.5,269.7 221.7,270.8 225.0,271.8 C228.3,272.8 231.7,274.2 235.0,275.7 C238.3,277.2 241.7,279.8 245.0,280.9 C248.3,282.0 251.7,282.4 255.0,282.6 C258.3,282.8 260.8,282.4 265.0,282.2 C269.2,282.0 275.8,281.1 280.0,281.5 C284.2,281.9 286.7,283.7 290.0,284.8 C293.3,285.9 295.0,286.9 300.0,288.0 C305.0,289.1 314.2,290.4 320.0,291.3 C325.8,292.2 330.8,292.8 335.0,293.2 C339.2,293.6 340.8,294.1 345.0,293.9 C349.2,293.7 355.0,292.6 360.0,292.0 C365.0,291.4 370.8,290.8 375.0,290.4 C379.2,289.9 381.7,290.1 385.0,289.3 C388.3,288.5 391.3,286.7 395.0,285.4 C398.7,284.1 402.8,281.3 407.0,281.3 C411.2,281.3 415.8,284.6 420.0,285.4 C424.2,286.2 428.7,285.4 432.0,286.0 C435.3,286.6 437.0,287.8 440.0,288.7 C443.0,289.6 446.7,290.6 450.0,291.5 C453.3,292.4 455.8,293.6 460.0,293.9 C464.2,294.2 470.0,293.8 475.0,293.2 C480.0,292.6 485.0,291.8 490.0,290.6 C495.0,289.4 500.0,287.6 505.0,286.1 C510.0,284.6 515.0,282.9 520.0,281.5 C525.0,280.1 530.8,278.8 535.0,277.6 C539.2,276.4 541.7,274.7 545.0,274.4 C548.3,274.1 550.8,274.5 555.0,275.7 C559.2,276.9 565.8,279.6 570.0,281.5 C574.2,283.4 576.7,285.6 580.0,287.4 C583.3,289.1 586.7,290.9 590.0,292.0 C593.3,293.1 596.7,292.9 600.0,294.0 C603.3,295.1 606.7,297.0 610.0,298.5 C613.3,300.0 616.7,301.1 620.0,303.0 C623.3,304.9 627.0,308.5 630.0,310.2 C633.0,311.9 634.7,312.9 638.0,313.4 C641.3,313.9 646.3,312.8 650.0,313.4 C653.7,313.9 656.7,315.8 660.0,316.7 C663.3,317.6 667.5,318.3 670.0,318.6 C672.5,318.9 671.7,319.8 675.0,318.6 C678.3,317.4 685.0,314.0 690.0,311.5 C695.0,309.0 700.8,306.3 705.0,303.7 C709.2,301.1 711.7,297.8 715.0,295.9 C718.3,294.0 720.8,293.8 725.0,292.6 C729.2,291.5 736.2,289.8 740.0,289.0 C743.8,288.2 745.5,287.6 748.0,288.0 C750.5,288.4 752.2,290.2 755.0,291.3 C757.8,292.4 761.7,293.2 765.0,294.6 C768.3,296.0 771.7,298.2 775.0,299.8 C778.3,301.4 781.7,303.3 785.0,304.3 C788.3,305.3 791.7,305.5 795.0,305.6 C798.3,305.7 801.7,305.6 805.0,305.0 C808.3,304.4 811.7,302.7 815.0,301.7 C818.3,300.7 823.3,299.5 825.0,299.1" fill="none" stroke="#ff6a6a" stroke-width="1" stroke-dasharray="1,2" opacity="0.7"/>
</g>
<text x="15.5" y="342" font-family="Liberation Sans" font-size="10.5" fill="#ec8a3c" textLength="15" lengthAdjust="spacingAndGlyphs">RSI</text>
<g clip-path="url(#crsi)">
<g clip-path="url(#crsimid)"><polygon points="14.0,403.0 14.0,376.1 18.0,370.3 22.0,367.0 25.0,365.7 28.0,356.6 31.0,365.0 35.0,367.0 41.0,375.5 46.0,365.0 49.0,371.6 53.0,369.0 57.0,371.6 59.0,379.4 63.0,366.4 68.0,374.8 72.0,359.2 77.0,354.6 81.0,353.3 83.0,357.3 89.0,347.5 92.0,348.8 96.0,349.4 101.0,365.0 104.0,356.0 108.0,354.6 113.0,356.6 119.0,368.3 121.0,357.9 125.0,357.3 131.0,362.5 137.0,354.0 142.0,350.0 147.0,348.1 152.0,345.5 155.0,344.2 157.0,346.2 159.0,351.4 163.0,348.1 165.0,347.5 166.0,341.6 170.0,344.9 174.0,346.8 175.0,349.4 178.0,342.9 184.0,342.3 188.0,346.8 192.0,347.5 195.0,341.0 201.0,335.8 207.0,334.5 209.0,333.2 211.0,344.9 214.0,354.0 217.0,354.6 221.0,351.4 223.0,352.0 225.0,365.7 229.0,360.5 234.0,359.2 238.0,361.2 239.0,374.2 242.0,363.8 250.0,359.9 254.0,354.6 259.0,357.3 264.0,355.3 267.0,352.7 272.0,355.3 277.0,359.9 282.0,366.4 287.0,378.1 292.0,373.5 298.0,370.3 300.0,372.2 303.0,367.7 308.0,372.2 313.0,366.4 316.0,360.5 320.0,374.2 325.0,381.3 328.0,372.2 331.0,374.8 336.0,376.1 339.0,370.9 342.0,369.0 345.0,361.2 350.0,367.7 355.0,371.6 360.0,356.6 366.0,366.4 369.0,363.8 376.0,365.0 382.0,357.3 387.0,352.0 390.0,346.8 393.0,341.6 399.0,339.0 402.0,345.5 404.0,344.2 405.0,350.1 410.0,376.8 415.0,375.5 420.0,374.2 423.0,358.6 427.0,356.0 431.0,353.3 435.0,363.1 438.0,377.4 441.0,374.8 443.0,376.1 447.0,376.1 450.0,371.6 456.0,378.1 462.0,371.6 467.0,367.0 471.0,363.8 476.0,365.0 479.0,363.1 481.0,367.0 483.0,356.0 489.0,354.6 496.0,355.3 498.0,363.1 503.0,360.5 508.0,350.1 512.0,351.4 516.0,344.2 519.0,343.0 522.0,346.2 525.0,352.7 530.0,345.5 535.0,350.1 541.0,341.6 542.0,340.3 544.0,352.7 550.0,357.3 555.0,364.4 561.0,365.0 567.0,369.0 570.0,371.6 573.0,378.1 577.0,374.8 582.0,374.2 584.0,368.3 587.0,380.7 591.0,369.6 597.0,379.4 605.0,392.0 615.0,398.0 625.0,400.0 635.0,398.0 645.0,397.0 651.0,397.5 653.0,395.0 655.0,397.0 657.0,394.5 659.0,396.5 661.0,393.5 663.0,395.5 665.0,392.5 667.0,394.0 669.0,390.5 671.0,387.2 677.0,375.5 684.0,380.0 689.0,372.2 695.0,370.3 701.0,372.2 705.0,367.0 708.0,355.3 711.0,356.0 716.0,367.0 720.0,361.8 723.0,374.2 727.0,363.1 730.0,360.5 735.0,360.5 742.0,370.9 745.0,365.7 747.0,365.7 750.0,376.8 753.0,379.4 756.0,384.0 758.0,380.7 765.0,378.7 767.0,381.3 769.0,387.0 771.0,390.0 774.0,388.0 777.0,390.0 781.0,389.5 785.0,378.7 790.0,381.3 794.0,384.0 797.0,376.8 800.0,374.8 804.0,376.1 810.0,372.2 815.0,381.3 818.0,371.6 822.0,369.0 822.0,403.0" fill="url(#rsifill)"/></g>
<line x1="13" y1="367.5" x2="886" y2="367.5" stroke="#7a858f" stroke-width="1" stroke-dasharray="3,3"/>
<rect x="14" y="346" width="809" height="1" fill="#3434a4"/><rect x="14" y="347" width="809" height="1" fill="#0e1082"/>
<rect x="14" y="388" width="809" height="1" fill="#3434a4"/><rect x="14" y="389" width="809" height="1" fill="#0e1082"/>
<g clip-path="url(#crsiorange)"><polyline points="14.0,376.1 18.0,370.3 22.0,367.0 25.0,365.7 28.0,356.6 31.0,365.0 35.0,367.0 41.0,375.5 46.0,365.0 49.0,371.6 53.0,369.0 57.0,371.6 59.0,379.4 63.0,366.4 68.0,374.8 72.0,359.2 77.0,354.6 81.0,353.3 83.0,357.3 89.0,347.5 92.0,348.8 96.0,349.4 101.0,365.0 104.0,356.0 108.0,354.6 113.0,356.6 119.0,368.3 121.0,357.9 125.0,357.3 131.0,362.5 137.0,354.0 142.0,350.0 147.0,348.1 152.0,345.5 155.0,344.2 157.0,346.2 159.0,351.4 163.0,348.1 165.0,347.5 166.0,341.6 170.0,344.9 174.0,346.8 175.0,349.4 178.0,342.9 184.0,342.3 188.0,346.8 192.0,347.5 195.0,341.0 201.0,335.8 207.0,334.5 209.0,333.2 211.0,344.9 214.0,354.0 217.0,354.6 221.0,351.4 223.0,352.0 225.0,365.7 229.0,360.5 234.0,359.2 238.0,361.2 239.0,374.2 242.0,363.8 250.0,359.9 254.0,354.6 259.0,357.3 264.0,355.3 267.0,352.7 272.0,355.3 277.0,359.9 282.0,366.4 287.0,378.1 292.0,373.5 298.0,370.3 300.0,372.2 303.0,367.7 308.0,372.2 313.0,366.4 316.0,360.5 320.0,374.2 325.0,381.3 328.0,372.2 331.0,374.8 336.0,376.1 339.0,370.9 342.0,369.0 345.0,361.2 350.0,367.7 355.0,371.6 360.0,356.6 366.0,366.4 369.0,363.8 376.0,365.0 382.0,357.3 387.0,352.0 390.0,346.8 393.0,341.6 399.0,339.0 402.0,345.5 404.0,344.2 405.0,350.1 410.0,376.8 415.0,375.5 420.0,374.2 423.0,358.6 427.0,356.0 431.0,353.3 435.0,363.1 438.0,377.4 441.0,374.8 443.0,376.1 447.0,376.1 450.0,371.6 456.0,378.1 462.0,371.6 467.0,367.0 471.0,363.8 476.0,365.0 479.0,363.1 481.0,367.0 483.0,356.0 489.0,354.6 496.0,355.3 498.0,363.1 503.0,360.5 508.0,350.1 512.0,351.4 516.0,344.2 519.0,343.0 522.0,346.2 525.0,352.7 530.0,345.5 535.0,350.1 541.0,341.6 542.0,340.3 544.0,352.7 550.0,357.3 555.0,364.4 561.0,365.0 567.0,369.0 570.0,371.6 573.0,378.1 577.0,374.8 582.0,374.2 584.0,368.3 587.0,380.7 591.0,369.6 597.0,379.4 605.0,392.0 615.0,398.0 625.0,400.0 635.0,398.0 645.0,397.0 651.0,397.5 653.0,395.0 655.0,397.0 657.0,394.5 659.0,396.5 661.0,393.5 663.0,395.5 665.0,392.5 667.0,394.0 669.0,390.5 671.0,387.2 677.0,375.5 684.0,380.0 689.0,372.2 695.0,370.3 701.0,372.2 705.0,367.0 708.0,355.3 711.0,356.0 716.0,367.0 720.0,361.8 723.0,374.2 727.0,363.1 730.0,360.5 735.0,360.5 742.0,370.9 745.0,365.7 747.0,365.7 750.0,376.8 753.0,379.4 756.0,384.0 758.0,380.7 765.0,378.7 767.0,381.3 769.0,387.0 771.0,390.0 774.0,388.0 777.0,390.0 781.0,389.5 785.0,378.7 790.0,381.3 794.0,384.0 797.0,376.8 800.0,374.8 804.0,376.1 810.0,372.2 815.0,381.3 818.0,371.6 822.0,369.0" fill="none" stroke="#ff9a30" stroke-width="1"/></g>
<g clip-path="url(#crsitop)"><polyline points="14.0,376.1 18.0,370.3 22.0,367.0 25.0,365.7 28.0,356.6 31.0,365.0 35.0,367.0 41.0,375.5 46.0,365.0 49.0,371.6 53.0,369.0 57.0,371.6 59.0,379.4 63.0,366.4 68.0,374.8 72.0,359.2 77.0,354.6 81.0,353.3 83.0,357.3 89.0,347.5 92.0,348.8 96.0,349.4 101.0,365.0 104.0,356.0 108.0,354.6 113.0,356.6 119.0,368.3 121.0,357.9 125.0,357.3 131.0,362.5 137.0,354.0 142.0,350.0 147.0,348.1 152.0,345.5 155.0,344.2 157.0,346.2 159.0,351.4 163.0,348.1 165.0,347.5 166.0,341.6 170.0,344.9 174.0,346.8 175.0,349.4 178.0,342.9 184.0,342.3 188.0,346.8 192.0,347.5 195.0,341.0 201.0,335.8 207.0,334.5 209.0,333.2 211.0,344.9 214.0,354.0 217.0,354.6 221.0,351.4 223.0,352.0 225.0,365.7 229.0,360.5 234.0,359.2 238.0,361.2 239.0,374.2 242.0,363.8 250.0,359.9 254.0,354.6 259.0,357.3 264.0,355.3 267.0,352.7 272.0,355.3 277.0,359.9 282.0,366.4 287.0,378.1 292.0,373.5 298.0,370.3 300.0,372.2 303.0,367.7 308.0,372.2 313.0,366.4 316.0,360.5 320.0,374.2 325.0,381.3 328.0,372.2 331.0,374.8 336.0,376.1 339.0,370.9 342.0,369.0 345.0,361.2 350.0,367.7 355.0,371.6 360.0,356.6 366.0,366.4 369.0,363.8 376.0,365.0 382.0,357.3 387.0,352.0 390.0,346.8 393.0,341.6 399.0,339.0 402.0,345.5 404.0,344.2 405.0,350.1 410.0,376.8 415.0,375.5 420.0,374.2 423.0,358.6 427.0,356.0 431.0,353.3 435.0,363.1 438.0,377.4 441.0,374.8 443.0,376.1 447.0,376.1 450.0,371.6 456.0,378.1 462.0,371.6 467.0,367.0 471.0,363.8 476.0,365.0 479.0,363.1 481.0,367.0 483.0,356.0 489.0,354.6 496.0,355.3 498.0,363.1 503.0,360.5 508.0,350.1 512.0,351.4 516.0,344.2 519.0,343.0 522.0,346.2 525.0,352.7 530.0,345.5 535.0,350.1 541.0,341.6 542.0,340.3 544.0,352.7 550.0,357.3 555.0,364.4 561.0,365.0 567.0,369.0 570.0,371.6 573.0,378.1 577.0,374.8 582.0,374.2 584.0,368.3 587.0,380.7 591.0,369.6 597.0,379.4 605.0,392.0 615.0,398.0 625.0,400.0 635.0,398.0 645.0,397.0 651.0,397.5 653.0,395.0 655.0,397.0 657.0,394.5 659.0,396.5 661.0,393.5 663.0,395.5 665.0,392.5 667.0,394.0 669.0,390.5 671.0,387.2 677.0,375.5 684.0,380.0 689.0,372.2 695.0,370.3 701.0,372.2 705.0,367.0 708.0,355.3 711.0,356.0 716.0,367.0 720.0,361.8 723.0,374.2 727.0,363.1 730.0,360.5 735.0,360.5 742.0,370.9 745.0,365.7 747.0,365.7 750.0,376.8 753.0,379.4 756.0,384.0 758.0,380.7 765.0,378.7 767.0,381.3 769.0,387.0 771.0,390.0 774.0,388.0 777.0,390.0 781.0,389.5 785.0,378.7 790.0,381.3 794.0,384.0 797.0,376.8 800.0,374.8 804.0,376.1 810.0,372.2 815.0,381.3 818.0,371.6 822.0,369.0" fill="none" stroke="#d040e8" stroke-width="1"/></g>
<g clip-path="url(#crsibot)"><polyline points="14.0,376.1 18.0,370.3 22.0,367.0 25.0,365.7 28.0,356.6 31.0,365.0 35.0,367.0 41.0,375.5 46.0,365.0 49.0,371.6 53.0,369.0 57.0,371.6 59.0,379.4 63.0,366.4 68.0,374.8 72.0,359.2 77.0,354.6 81.0,353.3 83.0,357.3 89.0,347.5 92.0,348.8 96.0,349.4 101.0,365.0 104.0,356.0 108.0,354.6 113.0,356.6 119.0,368.3 121.0,357.9 125.0,357.3 131.0,362.5 137.0,354.0 142.0,350.0 147.0,348.1 152.0,345.5 155.0,344.2 157.0,346.2 159.0,351.4 163.0,348.1 165.0,347.5 166.0,341.6 170.0,344.9 174.0,346.8 175.0,349.4 178.0,342.9 184.0,342.3 188.0,346.8 192.0,347.5 195.0,341.0 201.0,335.8 207.0,334.5 209.0,333.2 211.0,344.9 214.0,354.0 217.0,354.6 221.0,351.4 223.0,352.0 225.0,365.7 229.0,360.5 234.0,359.2 238.0,361.2 239.0,374.2 242.0,363.8 250.0,359.9 254.0,354.6 259.0,357.3 264.0,355.3 267.0,352.7 272.0,355.3 277.0,359.9 282.0,366.4 287.0,378.1 292.0,373.5 298.0,370.3 300.0,372.2 303.0,367.7 308.0,372.2 313.0,366.4 316.0,360.5 320.0,374.2 325.0,381.3 328.0,372.2 331.0,374.8 336.0,376.1 339.0,370.9 342.0,369.0 345.0,361.2 350.0,367.7 355.0,371.6 360.0,356.6 366.0,366.4 369.0,363.8 376.0,365.0 382.0,357.3 387.0,352.0 390.0,346.8 393.0,341.6 399.0,339.0 402.0,345.5 404.0,344.2 405.0,350.1 410.0,376.8 415.0,375.5 420.0,374.2 423.0,358.6 427.0,356.0 431.0,353.3 435.0,363.1 438.0,377.4 441.0,374.8 443.0,376.1 447.0,376.1 450.0,371.6 456.0,378.1 462.0,371.6 467.0,367.0 471.0,363.8 476.0,365.0 479.0,363.1 481.0,367.0 483.0,356.0 489.0,354.6 496.0,355.3 498.0,363.1 503.0,360.5 508.0,350.1 512.0,351.4 516.0,344.2 519.0,343.0 522.0,346.2 525.0,352.7 530.0,345.5 535.0,350.1 541.0,341.6 542.0,340.3 544.0,352.7 550.0,357.3 555.0,364.4 561.0,365.0 567.0,369.0 570.0,371.6 573.0,378.1 577.0,374.8 582.0,374.2 584.0,368.3 587.0,380.7 591.0,369.6 597.0,379.4 605.0,392.0 615.0,398.0 625.0,400.0 635.0,398.0 645.0,397.0 651.0,397.5 653.0,395.0 655.0,397.0 657.0,394.5 659.0,396.5 661.0,393.5 663.0,395.5 665.0,392.5 667.0,394.0 669.0,390.5 671.0,387.2 677.0,375.5 684.0,380.0 689.0,372.2 695.0,370.3 701.0,372.2 705.0,367.0 708.0,355.3 711.0,356.0 716.0,367.0 720.0,361.8 723.0,374.2 727.0,363.1 730.0,360.5 735.0,360.5 742.0,370.9 745.0,365.7 747.0,365.7 750.0,376.8 753.0,379.4 756.0,384.0 758.0,380.7 765.0,378.7 767.0,381.3 769.0,387.0 771.0,390.0 774.0,388.0 777.0,390.0 781.0,389.5 785.0,378.7 790.0,381.3 794.0,384.0 797.0,376.8 800.0,374.8 804.0,376.1 810.0,372.2 815.0,381.3 818.0,371.6 822.0,369.0" fill="none" stroke="#30d030" stroke-width="1"/></g>
</g>
<path d="M13.5,380.5 H81.5 Q83.5,380.5 83.5,382.5 V397.5 Q83.5,399.5 81.5,399.5 H13.5 Z" fill="#5b6d83" stroke="#b8cad8" stroke-width="1"/>
<rect x="13" y="380" width="2" height="27" fill="#d8eef0"/>
<text x="21" y="394" font-family="Liberation Sans" font-size="11" fill="#f4f4f4">Июль 2020</text>
<path d="M217.5,380.5 H275.5 Q277.5,380.5 277.5,382.5 V397.5 Q277.5,399.5 275.5,399.5 H217.5 Z" fill="#5b6d83" stroke="#b8cad8" stroke-width="1"/>
<rect x="217" y="380" width="2" height="27" fill="#d8eef0"/>
<text x="225" y="394" font-family="Liberation Sans" font-size="11" fill="#f4f4f4">Авг 2020</text>
<path d="M594.5,380.5 H652.5 Q654.5,380.5 654.5,382.5 V397.5 Q654.5,399.5 652.5,399.5 H594.5 Z" fill="#5b6d83" stroke="#b8cad8" stroke-width="1"/>
<rect x="594" y="380" width="2" height="27" fill="#d8eef0"/>
<text x="602" y="394" font-family="Liberation Sans" font-size="11" fill="#f4f4f4">Сен 2020</text>
<line x1="886" y1="45.5" x2="890" y2="45.5" stroke="#aebfcd" stroke-width="1"/>
<text x="894" y="51.5" font-family="Liberation Sans" font-size="11" fill="#f2f2f2">1.3400</text>
<line x1="886" y1="74.5" x2="890" y2="74.5" stroke="#aebfcd" stroke-width="1"/>
<text x="894" y="80.5" font-family="Liberation Sans" font-size="11" fill="#f2f2f2">1.3300</text>
<line x1="886" y1="102.5" x2="890" y2="102.5" stroke="#aebfcd" stroke-width="1"/>
<text x="894" y="108.5" font-family="Liberation Sans" font-size="11" fill="#f2f2f2">1.3200</text>
<line x1="886" y1="131.5" x2="890" y2="131.5" stroke="#aebfcd" stroke-width="1"/>
<text x="894" y="137.5" font-family="Liberation Sans" font-size="11" fill="#f2f2f2">1.3100</text>
<line x1="886" y1="159.5" x2="890" y2="159.5" stroke="#aebfcd" stroke-width="1"/>
<text x="894" y="165.5" font-family="Liberation Sans" font-size="11" fill="#f2f2f2">1.3000</text>
<line x1="886" y1="188.5" x2="890" y2="188.5" stroke="#aebfcd" stroke-width="1"/>
<text x="894" y="194.5" font-family="Liberation Sans" font-size="11" fill="#f2f2f2">1.2900</text>
<line x1="886" y1="217.5" x2="890" y2="217.5" stroke="#aebfcd" stroke-width="1"/>
<line x1="886" y1="246.5" x2="890" y2="246.5" stroke="#aebfcd" stroke-width="1"/>
<text x="894" y="251.5" font-family="Liberation Sans" font-size="11" fill="#f2f2f2">1.2700</text>
<line x1="886" y1="292.5" x2="890" y2="292.5" stroke="#aebfcd" stroke-width="1"/>
<text x="894" y="298.5" font-family="Liberation Sans" font-size="11" fill="#f2f2f2">-0.00</text>
<line x1="886" y1="367.5" x2="890" y2="367.5" stroke="#aebfcd" stroke-width="1"/>
<text x="894" y="373.5" font-family="Liberation Sans" font-size="11" fill="#f2f2f2">50</text>
<rect x="886" y="215" width="48" height="21" fill="#ffffff"/>
<text x="895" y="229" font-family="Liberation Sans" font-size="11" fill="#3a3a4a">1.2771</text>
<line x1="66.5" y1="403" x2="66.5" y2="406" stroke="#aebfcd" stroke-width="1"/>
<text x="65.8" y="426" text-anchor="middle" font-family="Liberation Sans" font-size="11" fill="#f2f2f2">20</text>
<line x1="141.5" y1="403" x2="141.5" y2="406" stroke="#aebfcd" stroke-width="1"/>
<text x="140.8" y="426" text-anchor="middle" font-family="Liberation Sans" font-size="11" fill="#f2f2f2">27</text>
<line x1="217.5" y1="403" x2="217.5" y2="406" stroke="#aebfcd" stroke-width="1"/>
<text x="216.8" y="426" text-anchor="middle" font-family="Liberation Sans" font-size="11" fill="#f2f2f2">3</text>
<line x1="292.5" y1="403" x2="292.5" y2="406" stroke="#aebfcd" stroke-width="1"/>
<text x="291.8" y="426" text-anchor="middle" font-family="Liberation Sans" font-size="11" fill="#f2f2f2">10</text>
<line x1="368.5" y1="403" x2="368.5" y2="406" stroke="#aebfcd" stroke-width="1"/>
<text x="367.8" y="426" text-anchor="middle" font-family="Liberation Sans" font-size="11" fill="#f2f2f2">17</text>
<line x1="443.5" y1="403" x2="443.5" y2="406" stroke="#aebfcd" stroke-width="1"/>
<text x="442.8" y="426" text-anchor="middle" font-family="Liberation Sans" font-size="11" fill="#f2f2f2">24</text>
<line x1="518.5" y1="403" x2="518.5" y2="406" stroke="#aebfcd" stroke-width="1"/>
<text x="517.8" y="426" text-anchor="middle" font-family="Liberation Sans" font-size="11" fill="#f2f2f2">31</text>
<line x1="594.5" y1="403" x2="594.5" y2="406" stroke="#aebfcd" stroke-width="1"/>
<text x="593.8" y="426" text-anchor="middle" font-family="Liberation Sans" font-size="11" fill="#f2f2f2">7</text>
<line x1="669.5" y1="403" x2="669.5" y2="406" stroke="#aebfcd" stroke-width="1"/>
<text x="668.8" y="426" text-anchor="middle" font-family="Liberation Sans" font-size="11" fill="#f2f2f2">14</text>
<line x1="745.5" y1="403" x2="745.5" y2="406" stroke="#aebfcd" stroke-width="1"/>
<text x="744.8" y="426" text-anchor="middle" font-family="Liberation Sans" font-size="11" fill="#f2f2f2">21</text>
<line x1="820.5" y1="403" x2="820.5" y2="406" stroke="#aebfcd" stroke-width="1"/>
<text x="819.8" y="426" text-anchor="middle" font-family="Liberation Sans" font-size="11" fill="#f2f2f2">28</text>
</svg></body></html>
